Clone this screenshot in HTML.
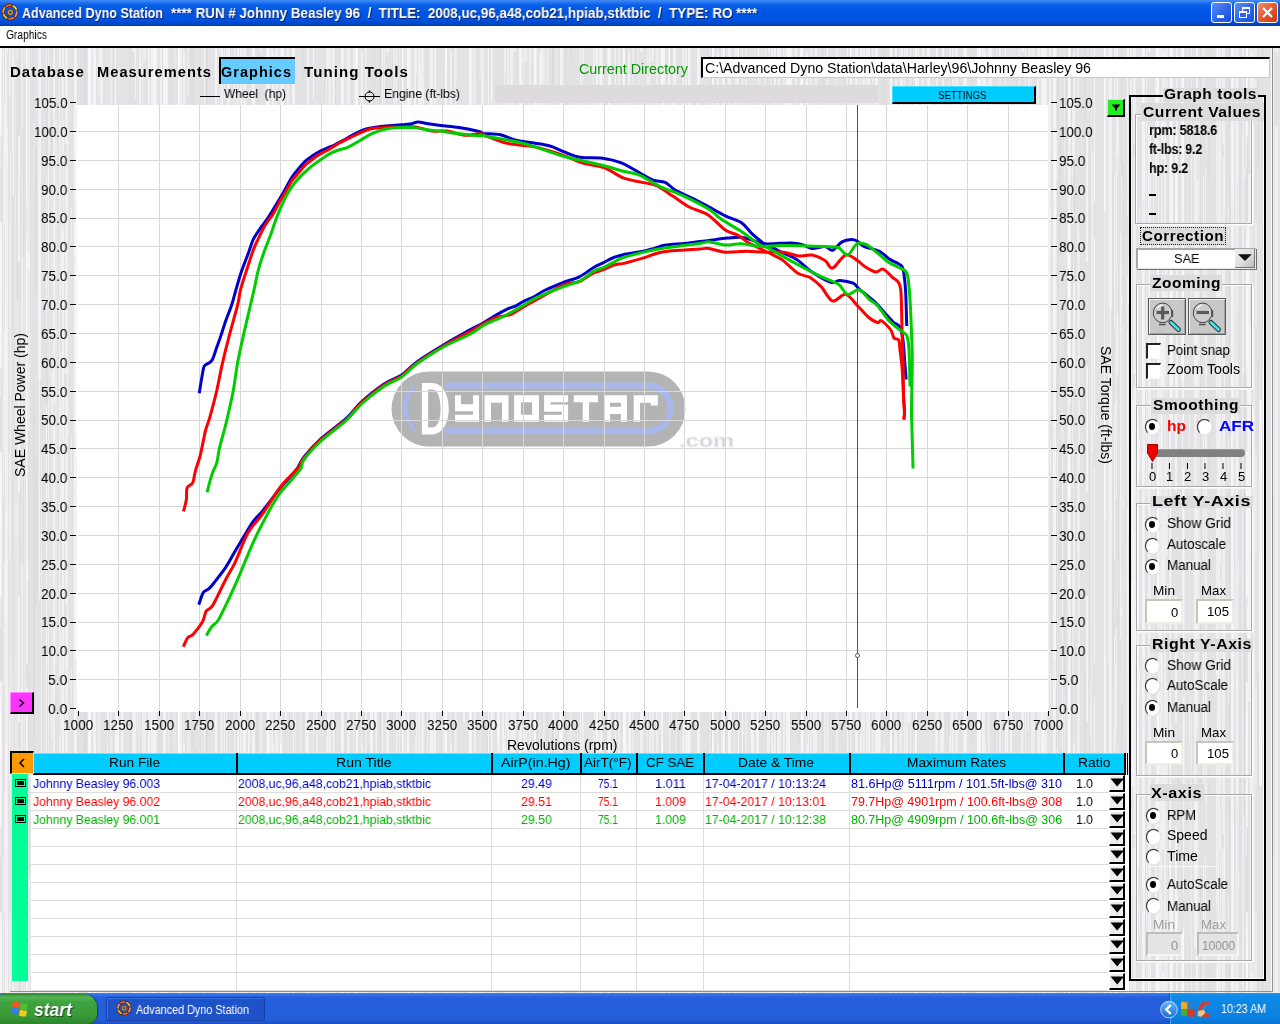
<!DOCTYPE html><html><head><meta charset="utf-8"><style>
*{margin:0;padding:0;box-sizing:border-box}
html,body{width:1280px;height:1024px;overflow:hidden;background:#dfdfe0;font-family:"Liberation Sans",sans-serif;}
.a{position:absolute;white-space:nowrap}
body>div.a{will-change:transform}
#metal{position:absolute;left:0;top:48px;width:1280px;height:946px;background:#e3e2e4}
.lb{position:absolute;background:#dcdcdc}
.fr{position:absolute;border:1px solid #fafafa;box-shadow:inset 1px 1px 0 #b4b4b4, -1px -1px 0 #b4b4b4}
.radio{position:absolute;width:15px;height:16px;border-radius:50%;background:#fff;border:1.5px solid #f0f0f0;border-top-color:#222;border-left-color:#222;box-shadow:0 0 0 0.6px #d8d8d8}
.radio.on::after{content:"";position:absolute;left:2.75px;top:2.75px;width:6.5px;height:7.5px;border-radius:50%;background:#000}
.inp{position:absolute;background:#fff;border:2px solid #f0ede4;border-top-color:#c8c4b8;border-left-color:#c8c4b8;}
.chk{position:absolute;width:15px;height:16px;background:#fff;border:1px solid #f4f4f4;border-top:2px solid #222;border-left:2px solid #222}
</style></head><body>
<div id="metal"></div>
<svg class="a" style="left:0;top:48px" width="1280" height="946"><defs><pattern id="p1" width="127" height="946" patternUnits="userSpaceOnUse"><rect x="41" y="404" width="1" height="349" fill="rgb(237,237,238)" opacity="0.8"/><rect x="74" y="931" width="1" height="819" fill="rgb(239,239,239)" opacity="0.8"/><rect x="74" y="-15" width="1" height="819" fill="rgb(239,239,239)" opacity="0.8"/><rect x="55" y="71" width="2" height="546" fill="rgb(237,234,237)" opacity="0.8"/><rect x="105" y="126" width="2" height="528" fill="rgb(246,246,248)" opacity="0.8"/><rect x="74" y="50" width="2" height="526" fill="rgb(236,235,237)" opacity="0.8"/><rect x="53" y="553" width="1" height="420" fill="rgb(245,243,247)" opacity="0.8"/><rect x="53" y="-393" width="1" height="420" fill="rgb(245,243,247)" opacity="0.8"/><rect x="104" y="185" width="3" height="405" fill="rgb(245,244,246)" opacity="0.8"/><rect x="12" y="729" width="2" height="364" fill="rgb(245,245,247)" opacity="0.8"/><rect x="12" y="-217" width="2" height="364" fill="rgb(245,245,247)" opacity="0.8"/><rect x="26" y="696" width="2" height="844" fill="rgb(242,240,243)" opacity="0.8"/><rect x="26" y="-250" width="2" height="844" fill="rgb(242,240,243)" opacity="0.8"/><rect x="74" y="370" width="2" height="606" fill="rgb(239,238,241)" opacity="0.8"/><rect x="74" y="-576" width="2" height="606" fill="rgb(239,238,241)" opacity="0.8"/><rect x="99" y="83" width="1" height="888" fill="rgb(240,237,241)" opacity="0.8"/><rect x="99" y="-863" width="1" height="888" fill="rgb(240,237,241)" opacity="0.8"/><rect x="93" y="294" width="2" height="923" fill="rgb(237,237,239)" opacity="0.8"/><rect x="93" y="-652" width="2" height="923" fill="rgb(237,237,239)" opacity="0.8"/><rect x="53" y="775" width="1" height="650" fill="rgb(238,235,239)" opacity="0.8"/><rect x="53" y="-171" width="1" height="650" fill="rgb(238,235,239)" opacity="0.8"/><rect x="5" y="79" width="3" height="871" fill="rgb(245,243,246)" opacity="0.8"/><rect x="5" y="-867" width="3" height="871" fill="rgb(245,243,246)" opacity="0.8"/><rect x="88" y="608" width="1" height="808" fill="rgb(245,242,245)" opacity="0.8"/><rect x="88" y="-338" width="1" height="808" fill="rgb(245,242,245)" opacity="0.8"/><rect x="107" y="276" width="1" height="785" fill="rgb(247,247,247)" opacity="0.8"/><rect x="107" y="-670" width="1" height="785" fill="rgb(247,247,247)" opacity="0.8"/><rect x="93" y="317" width="3" height="891" fill="rgb(246,243,247)" opacity="0.8"/><rect x="93" y="-629" width="3" height="891" fill="rgb(246,243,247)" opacity="0.8"/><rect x="91" y="908" width="2" height="655" fill="rgb(236,233,237)" opacity="0.8"/><rect x="91" y="-38" width="2" height="655" fill="rgb(236,233,237)" opacity="0.8"/><rect x="21" y="119" width="2" height="805" fill="rgb(236,235,237)" opacity="0.8"/><rect x="16" y="253" width="3" height="707" fill="rgb(242,239,242)" opacity="0.8"/><rect x="16" y="-693" width="3" height="707" fill="rgb(242,239,242)" opacity="0.8"/><rect x="21" y="411" width="2" height="862" fill="rgb(240,239,241)" opacity="0.8"/><rect x="21" y="-535" width="2" height="862" fill="rgb(240,239,241)" opacity="0.8"/><rect x="110" y="285" width="2" height="725" fill="rgb(241,238,241)" opacity="0.8"/><rect x="110" y="-661" width="2" height="725" fill="rgb(241,238,241)" opacity="0.8"/><rect x="19" y="180" width="1" height="454" fill="rgb(239,238,239)" opacity="0.8"/><rect x="62" y="186" width="2" height="569" fill="rgb(240,240,240)" opacity="0.8"/><rect x="53" y="378" width="2" height="924" fill="rgb(245,243,245)" opacity="0.8"/><rect x="53" y="-568" width="2" height="924" fill="rgb(245,243,245)" opacity="0.8"/><rect x="88" y="632" width="2" height="355" fill="rgb(243,240,244)" opacity="0.8"/><rect x="88" y="-314" width="2" height="355" fill="rgb(243,240,244)" opacity="0.8"/><rect x="51" y="106" width="2" height="793" fill="rgb(246,243,246)" opacity="0.8"/><rect x="24" y="213" width="1" height="751" fill="rgb(238,238,239)" opacity="0.8"/><rect x="24" y="-733" width="1" height="751" fill="rgb(238,238,239)" opacity="0.8"/><rect x="76" y="104" width="1" height="300" fill="rgb(245,244,247)" opacity="0.8"/><rect x="12" y="628" width="1" height="326" fill="rgb(237,236,239)" opacity="0.8"/><rect x="12" y="-318" width="1" height="326" fill="rgb(237,236,239)" opacity="0.8"/><rect x="48" y="649" width="1" height="558" fill="rgb(241,239,242)" opacity="0.8"/><rect x="48" y="-297" width="1" height="558" fill="rgb(241,239,242)" opacity="0.8"/><rect x="15" y="869" width="1" height="799" fill="rgb(243,240,244)" opacity="0.8"/><rect x="15" y="-77" width="1" height="799" fill="rgb(243,240,244)" opacity="0.8"/><rect x="39" y="147" width="1" height="404" fill="rgb(247,245,249)" opacity="0.8"/><rect x="33" y="848" width="2" height="465" fill="rgb(244,244,244)" opacity="0.8"/><rect x="33" y="-98" width="2" height="465" fill="rgb(244,244,244)" opacity="0.8"/><rect x="121" y="370" width="2" height="450" fill="rgb(247,247,249)" opacity="0.8"/><rect x="38" y="884" width="3" height="393" fill="rgb(247,245,249)" opacity="0.8"/><rect x="38" y="-62" width="3" height="393" fill="rgb(247,245,249)" opacity="0.8"/><rect x="46" y="364" width="1" height="528" fill="rgb(244,242,246)" opacity="0.8"/><rect x="28" y="830" width="2" height="499" fill="rgb(248,247,249)" opacity="0.8"/><rect x="28" y="-116" width="2" height="499" fill="rgb(248,247,249)" opacity="0.8"/><rect x="94" y="204" width="1" height="830" fill="rgb(243,241,245)" opacity="0.8"/><rect x="94" y="-742" width="1" height="830" fill="rgb(243,241,245)" opacity="0.8"/><rect x="3" y="809" width="1" height="586" fill="rgb(243,241,243)" opacity="0.8"/><rect x="3" y="-137" width="1" height="586" fill="rgb(243,241,243)" opacity="0.8"/><rect x="88" y="352" width="2" height="757" fill="rgb(248,246,249)" opacity="0.8"/><rect x="88" y="-594" width="2" height="757" fill="rgb(248,246,249)" opacity="0.8"/><rect x="10" y="104" width="1" height="532" fill="rgb(243,242,244)" opacity="0.8"/><rect x="26" y="639" width="2" height="924" fill="rgb(249,249,250)" opacity="0.8"/><rect x="26" y="-307" width="2" height="924" fill="rgb(249,249,250)" opacity="0.8"/><rect x="116" y="352" width="3" height="386" fill="rgb(249,249,250)" opacity="0.8"/><rect x="100" y="768" width="3" height="504" fill="rgb(243,242,244)" opacity="0.8"/><rect x="100" y="-178" width="3" height="504" fill="rgb(243,242,244)" opacity="0.8"/></pattern><pattern id="p2" width="173" height="310" patternUnits="userSpaceOnUse"><rect x="162" y="44" width="1" height="242" fill="rgb(219,216,221)" opacity="0.35"/><rect x="21" y="81" width="3" height="127" fill="rgb(214,214,214)" opacity="0.35"/><rect x="151" y="74" width="2" height="282" fill="rgb(222,220,222)" opacity="0.35"/><rect x="151" y="-236" width="2" height="282" fill="rgb(222,220,222)" opacity="0.35"/><rect x="140" y="67" width="2" height="50" fill="rgb(212,212,214)" opacity="0.35"/><rect x="35" y="99" width="2" height="148" fill="rgb(212,210,212)" opacity="0.35"/><rect x="74" y="123" width="2" height="206" fill="rgb(216,213,216)" opacity="0.35"/><rect x="74" y="-187" width="2" height="206" fill="rgb(216,213,216)" opacity="0.35"/><rect x="15" y="181" width="3" height="274" fill="rgb(222,219,224)" opacity="0.35"/><rect x="15" y="-129" width="3" height="274" fill="rgb(222,219,224)" opacity="0.35"/><rect x="33" y="77" width="2" height="308" fill="rgb(220,220,221)" opacity="0.35"/><rect x="33" y="-233" width="2" height="308" fill="rgb(220,220,221)" opacity="0.35"/><rect x="46" y="2" width="2" height="116" fill="rgb(214,213,215)" opacity="0.35"/><rect x="158" y="61" width="3" height="71" fill="rgb(217,214,217)" opacity="0.35"/><rect x="143" y="127" width="1" height="137" fill="rgb(216,216,216)" opacity="0.35"/><rect x="129" y="287" width="2" height="54" fill="rgb(224,224,225)" opacity="0.35"/><rect x="129" y="-23" width="2" height="54" fill="rgb(224,224,225)" opacity="0.35"/><rect x="83" y="258" width="2" height="302" fill="rgb(215,213,216)" opacity="0.35"/><rect x="83" y="-52" width="2" height="302" fill="rgb(215,213,216)" opacity="0.35"/><rect x="130" y="244" width="2" height="299" fill="rgb(215,213,217)" opacity="0.35"/><rect x="130" y="-66" width="2" height="299" fill="rgb(215,213,217)" opacity="0.35"/><rect x="51" y="70" width="2" height="253" fill="rgb(213,210,214)" opacity="0.35"/><rect x="51" y="-240" width="2" height="253" fill="rgb(213,210,214)" opacity="0.35"/><rect x="80" y="123" width="1" height="259" fill="rgb(213,212,215)" opacity="0.35"/><rect x="80" y="-187" width="1" height="259" fill="rgb(213,212,215)" opacity="0.35"/><rect x="77" y="79" width="1" height="227" fill="rgb(214,212,214)" opacity="0.35"/><rect x="119" y="48" width="1" height="243" fill="rgb(226,223,226)" opacity="0.35"/><rect x="170" y="82" width="1" height="260" fill="rgb(220,217,221)" opacity="0.35"/><rect x="170" y="-228" width="1" height="260" fill="rgb(220,217,221)" opacity="0.35"/><rect x="107" y="182" width="1" height="203" fill="rgb(213,211,213)" opacity="0.35"/><rect x="107" y="-128" width="1" height="203" fill="rgb(213,211,213)" opacity="0.35"/><rect x="86" y="234" width="2" height="265" fill="rgb(223,223,224)" opacity="0.35"/><rect x="86" y="-76" width="2" height="265" fill="rgb(223,223,224)" opacity="0.35"/><rect x="84" y="151" width="2" height="302" fill="rgb(213,213,213)" opacity="0.35"/><rect x="84" y="-159" width="2" height="302" fill="rgb(213,213,213)" opacity="0.35"/><rect x="26" y="135" width="1" height="179" fill="rgb(212,211,213)" opacity="0.35"/><rect x="26" y="-175" width="1" height="179" fill="rgb(212,211,213)" opacity="0.35"/><rect x="33" y="132" width="2" height="247" fill="rgb(214,211,216)" opacity="0.35"/><rect x="33" y="-178" width="2" height="247" fill="rgb(214,211,216)" opacity="0.35"/><rect x="83" y="142" width="1" height="69" fill="rgb(224,223,225)" opacity="0.35"/><rect x="18" y="8" width="1" height="85" fill="rgb(224,222,224)" opacity="0.35"/><rect x="155" y="34" width="1" height="175" fill="rgb(225,225,226)" opacity="0.35"/><rect x="2" y="283" width="1" height="253" fill="rgb(226,224,228)" opacity="0.35"/><rect x="2" y="-27" width="1" height="253" fill="rgb(226,224,228)" opacity="0.35"/><rect x="33" y="269" width="1" height="162" fill="rgb(213,212,214)" opacity="0.35"/><rect x="33" y="-41" width="1" height="162" fill="rgb(213,212,214)" opacity="0.35"/><rect x="12" y="103" width="1" height="199" fill="rgb(222,220,224)" opacity="0.35"/><rect x="52" y="228" width="1" height="296" fill="rgb(222,221,223)" opacity="0.35"/><rect x="52" y="-82" width="1" height="296" fill="rgb(222,221,223)" opacity="0.35"/><rect x="88" y="128" width="1" height="58" fill="rgb(212,212,214)" opacity="0.35"/><rect x="129" y="97" width="2" height="303" fill="rgb(219,218,220)" opacity="0.35"/><rect x="129" y="-213" width="2" height="303" fill="rgb(219,218,220)" opacity="0.35"/><rect x="27" y="221" width="3" height="293" fill="rgb(220,217,222)" opacity="0.35"/><rect x="27" y="-89" width="3" height="293" fill="rgb(220,217,222)" opacity="0.35"/><rect x="78" y="110" width="3" height="157" fill="rgb(217,216,219)" opacity="0.35"/><rect x="162" y="207" width="1" height="217" fill="rgb(212,211,212)" opacity="0.35"/><rect x="162" y="-103" width="1" height="217" fill="rgb(212,211,212)" opacity="0.35"/><rect x="18" y="130" width="3" height="260" fill="rgb(214,214,214)" opacity="0.35"/><rect x="18" y="-180" width="3" height="260" fill="rgb(214,214,214)" opacity="0.35"/><rect x="170" y="259" width="2" height="184" fill="rgb(221,220,223)" opacity="0.35"/><rect x="170" y="-51" width="2" height="184" fill="rgb(221,220,223)" opacity="0.35"/><rect x="75" y="235" width="1" height="134" fill="rgb(214,212,215)" opacity="0.35"/><rect x="75" y="-75" width="1" height="134" fill="rgb(214,212,215)" opacity="0.35"/><rect x="0" y="186" width="1" height="208" fill="rgb(220,218,220)" opacity="0.35"/><rect x="0" y="-124" width="1" height="208" fill="rgb(220,218,220)" opacity="0.35"/></pattern><pattern id="p3" width="89" height="230" patternUnits="userSpaceOnUse"><rect x="4" y="55" width="1" height="121" fill="rgb(245,245,246)" opacity="0.7"/><rect x="48" y="121" width="1" height="101" fill="rgb(246,245,248)" opacity="0.7"/><rect x="0" y="67" width="1" height="52" fill="rgb(244,241,246)" opacity="0.7"/><rect x="5" y="5" width="2" height="106" fill="rgb(249,248,249)" opacity="0.7"/><rect x="74" y="218" width="2" height="222" fill="rgb(244,241,245)" opacity="0.7"/><rect x="74" y="-12" width="2" height="222" fill="rgb(244,241,245)" opacity="0.7"/><rect x="63" y="72" width="1" height="215" fill="rgb(244,244,246)" opacity="0.7"/><rect x="63" y="-158" width="1" height="215" fill="rgb(244,244,246)" opacity="0.7"/><rect x="65" y="109" width="3" height="217" fill="rgb(244,244,246)" opacity="0.7"/><rect x="65" y="-121" width="3" height="217" fill="rgb(244,244,246)" opacity="0.7"/><rect x="74" y="174" width="3" height="207" fill="rgb(247,247,247)" opacity="0.7"/><rect x="74" y="-56" width="3" height="207" fill="rgb(247,247,247)" opacity="0.7"/><rect x="5" y="163" width="1" height="122" fill="rgb(243,240,244)" opacity="0.7"/><rect x="5" y="-67" width="1" height="122" fill="rgb(243,240,244)" opacity="0.7"/><rect x="71" y="160" width="1" height="34" fill="rgb(247,244,248)" opacity="0.7"/><rect x="0" y="204" width="2" height="47" fill="rgb(242,242,244)" opacity="0.7"/><rect x="0" y="-26" width="2" height="47" fill="rgb(242,242,244)" opacity="0.7"/><rect x="60" y="207" width="1" height="49" fill="rgb(248,247,250)" opacity="0.7"/><rect x="60" y="-23" width="1" height="49" fill="rgb(248,247,250)" opacity="0.7"/><rect x="26" y="189" width="1" height="196" fill="rgb(254,251,255)" opacity="0.7"/><rect x="26" y="-41" width="1" height="196" fill="rgb(254,251,255)" opacity="0.7"/><rect x="9" y="175" width="2" height="103" fill="rgb(241,240,241)" opacity="0.7"/><rect x="9" y="-55" width="2" height="103" fill="rgb(241,240,241)" opacity="0.7"/><rect x="76" y="84" width="1" height="95" fill="rgb(249,248,249)" opacity="0.7"/><rect x="61" y="124" width="1" height="98" fill="rgb(243,242,245)" opacity="0.7"/><rect x="62" y="181" width="1" height="162" fill="rgb(249,246,250)" opacity="0.7"/><rect x="62" y="-49" width="1" height="162" fill="rgb(249,246,250)" opacity="0.7"/><rect x="59" y="228" width="1" height="170" fill="rgb(246,244,246)" opacity="0.7"/><rect x="59" y="-2" width="1" height="170" fill="rgb(246,244,246)" opacity="0.7"/><rect x="60" y="74" width="1" height="147" fill="rgb(242,239,243)" opacity="0.7"/><rect x="49" y="53" width="1" height="49" fill="rgb(242,241,244)" opacity="0.7"/><rect x="67" y="92" width="1" height="63" fill="rgb(248,248,250)" opacity="0.7"/><rect x="46" y="127" width="1" height="154" fill="rgb(252,252,252)" opacity="0.7"/><rect x="46" y="-103" width="1" height="154" fill="rgb(252,252,252)" opacity="0.7"/><rect x="0" y="174" width="2" height="145" fill="rgb(252,250,254)" opacity="0.7"/><rect x="0" y="-56" width="2" height="145" fill="rgb(252,250,254)" opacity="0.7"/><rect x="18" y="88" width="2" height="126" fill="rgb(250,250,251)" opacity="0.7"/><rect x="0" y="192" width="1" height="116" fill="rgb(252,252,252)" opacity="0.7"/><rect x="0" y="-38" width="1" height="116" fill="rgb(252,252,252)" opacity="0.7"/></pattern></defs><rect width="1280" height="946" fill="url(#p1)"/><rect width="1280" height="946" fill="url(#p2)"/><rect width="1280" height="946" fill="url(#p3)"/></svg>
<div class="a" style="left:0;top:0;width:1280px;height:26px;background:linear-gradient(#3e8ef7 0px,#2a78f2 2px,#0a5fe8 5px,#0055e5 12px,#0052e0 20px,#0046c8 24px,#003aa8 26px);"></div>
<svg class="a" style="left:1px;top:2.5px" width="18" height="18" viewBox="0 0 18 18"><path d="M5.60 3.11A6.8 6.8 0 0 1 9.95 2.27" fill="none" stroke="#5a2008" stroke-width="3.2" stroke-linecap="round"/><path d="M12.40 3.11A6.8 6.8 0 0 1 15.30 6.45" fill="none" stroke="#5a2008" stroke-width="3.2" stroke-linecap="round"/><path d="M15.80 9.00A6.8 6.8 0 0 1 14.36 13.19" fill="none" stroke="#5a2008" stroke-width="3.2" stroke-linecap="round"/><path d="M12.40 14.89A6.8 6.8 0 0 1 8.05 15.73" fill="none" stroke="#5a2008" stroke-width="3.2" stroke-linecap="round"/><path d="M5.60 14.89A6.8 6.8 0 0 1 2.70 11.55" fill="none" stroke="#5a2008" stroke-width="3.2" stroke-linecap="round"/><path d="M2.20 9.00A6.8 6.8 0 0 1 3.64 4.81" fill="none" stroke="#5a2008" stroke-width="3.2" stroke-linecap="round"/><path d="M5.60 3.11A6.8 6.8 0 0 1 9.95 2.27" fill="none" stroke="#f06828" stroke-width="1.8" stroke-linecap="round"/><path d="M12.40 3.11A6.8 6.8 0 0 1 15.30 6.45" fill="none" stroke="#f8c838" stroke-width="1.8" stroke-linecap="round"/><path d="M15.80 9.00A6.8 6.8 0 0 1 14.36 13.19" fill="none" stroke="#f89060" stroke-width="1.8" stroke-linecap="round"/><path d="M12.40 14.89A6.8 6.8 0 0 1 8.05 15.73" fill="none" stroke="#f07030" stroke-width="1.8" stroke-linecap="round"/><path d="M5.60 14.89A6.8 6.8 0 0 1 2.70 11.55" fill="none" stroke="#f8c020" stroke-width="1.8" stroke-linecap="round"/><path d="M2.20 9.00A6.8 6.8 0 0 1 3.64 4.81" fill="none" stroke="#f0a068" stroke-width="1.8" stroke-linecap="round"/><circle cx="9.3" cy="9.3" r="2" fill="none" stroke="#6a3008" stroke-width="2.2"/><circle cx="9.3" cy="9.3" r="2" fill="none" stroke="#f0a020" stroke-width="1.2"/></svg>
<div class="a" style="left:22.00px;top:6.15px;font-size:14px;line-height:14px;font-weight:bold;color:#fff;transform:scaleX(0.8973);transform-origin:0 0;text-shadow:1px 1px 0 #0a246a;">Advanced Dyno Station</div>
<div class="a" style="left:171.00px;top:6.15px;font-size:14px;line-height:14px;font-weight:bold;color:#fff;transform:scaleX(0.9570);transform-origin:0 0;text-shadow:1px 1px 0 #0a246a;white-space:pre;">**** RUN # Johnny Beasley 96  /  TITLE:  2008,uc,96,a48,cob21,hpiab,stktbic  /  TYPE: RO ****</div>
<div class="a" style="left:1211px;top:2px;width:21px;height:21px;border:1px solid #fff;border-radius:3px;background:linear-gradient(135deg,#5a8cf8,#2a62e8 60%,#1c4fd8)"><div class="a" style="left:5px;top:12px;width:7px;height:3px;background:#fff"></div></div>
<div class="a" style="left:1234px;top:2px;width:21px;height:21px;border:1px solid #fff;border-radius:3px;background:linear-gradient(135deg,#5a8cf8,#2a62e8 60%,#1c4fd8)"><div class="a" style="left:7px;top:4px;width:8px;height:7px;border:1px solid #fff;border-top-width:2px"></div><div class="a" style="left:4px;top:8px;width:8px;height:7px;border:1px solid #fff;border-top-width:2px;background:#2f66ea"></div></div>
<div class="a" style="left:1257px;top:2px;width:21px;height:21px;border:1px solid #fff;border-radius:3px;background:linear-gradient(135deg,#f0906a,#e0542a 55%,#c83c10)"><svg class="a" style="left:3px;top:3px" width="13" height="13"><path d="M2 2L11 11M11 2L2 11" stroke="#fff" stroke-width="2.2"/></svg></div>
<div class="a" style="left:0;top:26px;width:1280px;height:20px;background:#fff"></div>
<div class="a" style="left:6.00px;top:28.84px;font-size:12px;line-height:12px;color:#000;transform:scaleX(0.8538);transform-origin:0 0;">Graphics</div>
<div class="a" style="left:0;top:46px;width:1280px;height:2px;background:#000"></div>
<div class="a" style="left:219px;top:57px;width:76px;height:27px;background:#66ccff;border-top:2px solid #000;border-left:2px solid #000"></div>
<div class="a" style="left:10.00px;top:65.15px;font-size:14px;line-height:14px;font-weight:bold;color:#000;letter-spacing:1px;transform:scaleX(1.0675);transform-origin:0 0;">Database</div>
<div class="a" style="left:97.00px;top:65.15px;font-size:14px;line-height:14px;font-weight:bold;color:#000;letter-spacing:1px;transform:scaleX(1.0450);transform-origin:0 0;">Measurements</div>
<div class="a" style="left:221.00px;top:65.15px;font-size:14px;line-height:14px;font-weight:bold;color:#000;letter-spacing:1px;transform:scaleX(1.0336);transform-origin:0 0;">Graphics</div>
<div class="a" style="left:304.00px;top:65.15px;font-size:14px;line-height:14px;font-weight:bold;color:#000;letter-spacing:1px;transform:scaleX(1.0737);transform-origin:0 0;">Tuning Tools</div>
<div class="a" style="left:579.00px;top:62.15px;font-size:14px;line-height:14px;color:#009900;transform:scaleX(1.0227);transform-origin:0 0;">Current Directory</div>
<div class="a" style="left:701px;top:57px;width:569px;height:21px;background:#fff;border-top:2px solid #000;border-left:2px solid #000;border-right:1px solid #c8c8c8;border-bottom:1px solid #c8c8c8"></div>
<div class="a" style="left:705.00px;top:61.15px;font-size:14px;line-height:14px;color:#000;transform:scaleX(1.0122);transform-origin:0 0;">C:\Advanced Dyno Station\data\Harley\96\Johnny Beasley 96</div>
<div class="a" style="left:200px;top:96px;width:20px;height:1px;background:#000"></div>
<div class="a" style="left:224.00px;top:87.00px;font-size:13px;line-height:13px;color:#000;transform:scaleX(0.9227);transform-origin:0 0;white-space:pre;">Wheel  (hp)</div>
<svg class="a" style="left:358px;top:89px" width="24" height="16"><path d="M1 7.5H22" stroke="#000" stroke-width="1"/><circle cx="11.5" cy="7.5" r="4.5" fill="none" stroke="#000" stroke-width="1"/><path d="M11.5 1.5v2M11.5 11.5v2" stroke="#000" stroke-width="1.4"/></svg>
<div class="a" style="left:384.00px;top:87.00px;font-size:13px;line-height:13px;color:#000;transform:scaleX(0.9392);transform-origin:0 0;">Engine (ft-lbs)</div>
<div class="a" style="left:495px;top:85px;width:383px;height:18px;background:#dddbdd"></div>
<div class="a" style="left:892px;top:86px;width:144px;height:18px;background:#00ccff;border-right:2px solid #000;border-bottom:2px solid #000;border-top:1px solid #40e0ff;border-left:1px solid #40e0ff"></div>
<div class="a" style="left:938.25px;top:90.27px;font-size:11.5px;line-height:11.5px;color:#000;transform:scaleX(0.8434);transform-origin:0 0;">SETTINGS</div>
<svg class="a" style="left:0;top:0" width="1280" height="760" viewBox="0 0 1280 760"><rect x="77" y="105" width="971.5" height="607" fill="#fff"/><g><rect x="391.5" y="371.5" width="294" height="75" rx="37.5" fill="#b4b4b4"/><path d="M445 385.6 H650 A22.9 22.9 0 0 1 650 431.2 H445" fill="none" stroke="#a8b8ec" stroke-width="6"/><path d="M414 384.5 Q390.5 408 415 432 L416.5 430 Q399.5 408 415.5 386.5 Z" fill="#a8b8ec"/><path d="M421.9 383.1 H432 C442 383.1 448.75 394 448.75 408.75 C448.75 423.5 442 434.4 432 434.4 H421.9 Z M428.1 389.4 V427.5 H432.5 C437.5 427.5 440.6 419 440.6 408.5 C440.6 398 437.5 389.4 432.5 389.4 Z" fill="#fff" fill-rule="evenodd"/><path d="M455 395.25h6v16h-6zM455 404.3h24v7h-24zM473 395.25h6v26.5h-6zM455 414.75h24v6.9h-24zM484.5 395.25h24v7.5h-24zM484.5 395.25h6.5v26.5h-6.5zM502 395.25h6.5v26.5h-6.5zM514.1 395.25h24.8v7.1h-24.8zM514.1 414.75h24.8v6.9h-24.8zM514.1 395.25h6.8v26.4h-6.8zM532.1 395.25h6.8v26.4h-6.8zM544.1 395.25h24v7.1h-24zM544.1 395.25h6.4v16.5h-6.4zM544.1 404.6h24v7.1h-24zM561.75 404.6h6.35v17h-6.35zM544.1 414.75h24v6.9h-24zM573.75 395.25h24.35v7h-24.35zM582.75 395.25h6.35v26.4h-6.35zM603.9 395.25h23v7.6h-23zM603.9 395.25h6.1v26.4h-6.1zM620.9 395.25h6v26.4h-6zM603.9 406.7h23v7.3h-23zM633.7 395.25h22v7.6h-22zM633.7 395.25h6.3v26.4h-6.3zM650.7 395.25h7.1v10.35h-7.1z" fill="#fff"/><text x="679" y="447" font-family="Liberation Sans" font-weight="bold" font-size="19" textLength="55" lengthAdjust="spacingAndGlyphs" fill="#d0d0d0" stroke="#f0f0f0" stroke-width="1">.com</text></g><path d="M118.5 105V712M159.5 105V712M199.5 105V712M240.5 105V712M280.5 105V712M321.5 105V712M361.5 105V712M401.5 105V712M442.5 105V712M482.5 105V712M523.5 105V712M563.5 105V712M604.5 105V712M644.5 105V712M684.5 105V712M725.5 105V712M765.5 105V712M806.5 105V712M846.5 105V712M886.5 105V712M927.5 105V712M967.5 105V712M1008.5 105V712M78 679.5H1048M78 650.5H1048M78 622.5H1048M78 593.5H1048M78 564.5H1048M78 535.5H1048M78 506.5H1048M78 477.5H1048M78 448.5H1048M78 420.5H1048M78 391.5H1048M78 362.5H1048M78 333.5H1048M78 304.5H1048M78 275.5H1048M78 246.5H1048M78 218.5H1048M78 189.5H1048M78 160.5H1048M78 131.5H1048" stroke="#d8d8d8" stroke-width="1" fill="none"/><path d="M70 708.5H76M70 679.5H76M70 650.5H76M70 622.5H76M70 593.5H76M70 564.5H76M70 535.5H76M70 506.5H76M70 477.5H76M70 448.5H76M70 420.5H76M70 391.5H76M70 362.5H76M70 333.5H76M70 304.5H76M70 275.5H76M70 246.5H76M70 218.5H76M70 189.5H76M70 160.5H76M70 131.5H76M70 102.5H76M78.5 711V716M118.5 711V716M159.5 711V716M199.5 711V716M240.5 711V716M280.5 711V716M321.5 711V716M361.5 711V716M401.5 711V716M442.5 711V716M482.5 711V716M523.5 711V716M563.5 711V716M604.5 711V716M644.5 711V716M684.5 711V716M725.5 711V716M765.5 711V716M806.5 711V716M846.5 711V716M886.5 711V716M927.5 711V716M967.5 711V716M1008.5 711V716M1048.5 711V716" stroke="#000" stroke-width="1" fill="none"/><path d="M857.5 105V708" stroke="#6a3aa0" stroke-width="1"/><circle cx="857.5" cy="655.5" r="2" fill="#fff" stroke="#6a3aa0" stroke-width="1"/><path d="M199.5 391.7C200.1 388.0 202.5 373.0 203.4 368.8C204.3 364.6 204.3 366.1 205.0 365.3C205.7 364.5 206.6 364.4 207.8 363.6C209.0 362.8 210.8 362.5 212.2 360.0C213.6 357.5 215.2 351.7 216.6 347.8C218.0 343.9 219.5 339.9 221.0 335.4C222.5 330.9 224.5 324.4 226.2 319.6C227.9 314.8 229.9 310.3 231.5 305.6C233.1 300.9 234.3 295.6 235.9 290.0C237.5 284.4 239.6 276.9 241.7 270.8C243.8 264.7 246.9 257.1 248.8 252.0C250.6 246.9 251.7 242.8 253.4 239.2C255.1 235.6 256.9 233.4 259.3 229.8C261.7 226.2 265.4 221.9 268.7 216.8C272.0 211.7 277.2 202.8 280.0 198.2C282.8 193.6 284.0 191.3 285.9 188.0C287.8 184.7 289.8 180.4 291.7 177.5C293.6 174.6 295.5 172.4 297.6 169.9C299.7 167.4 302.4 163.9 304.6 161.7C306.8 159.5 309.4 157.9 311.6 156.4C313.8 154.9 315.7 153.6 318.1 152.3C320.5 151.0 324.4 149.3 326.9 148.2C329.4 147.1 331.5 146.5 333.9 145.3C336.3 144.1 338.6 142.8 342.2 140.9C345.8 139.0 352.5 135.1 356.3 133.2C360.1 131.3 362.7 130.0 366.1 129.0C369.5 128.0 371.8 127.6 377.4 126.9C383.0 126.2 396.1 125.2 401.3 124.8C406.5 124.4 407.0 124.5 409.7 124.1C412.4 123.7 415.4 122.1 418.1 122.0C420.8 121.9 423.0 122.8 426.6 123.4C430.2 124.0 435.4 124.8 440.6 125.5C445.8 126.2 452.6 126.6 458.9 127.6C465.2 128.6 476.2 130.9 480.0 131.8C483.8 132.7 479.3 132.9 482.5 133.4C485.7 133.9 494.9 133.6 500.3 134.7C505.7 135.8 510.7 138.9 516.3 140.3C521.9 141.7 529.6 142.3 535.0 143.2C540.4 144.1 545.4 144.7 550.0 146.0C554.6 147.3 558.7 149.8 563.5 151.6C568.3 153.4 573.7 156.1 580.0 157.2C586.3 158.3 596.0 157.3 602.6 158.2C609.2 159.1 615.3 160.5 621.3 162.9C627.3 165.3 634.9 170.3 640.0 173.1C645.1 175.9 649.1 178.7 653.1 180.2C657.1 181.7 661.5 180.7 665.2 182.4C668.9 184.1 671.0 187.7 676.1 190.6C681.2 193.5 691.3 197.7 696.9 200.5C702.5 203.3 706.6 205.7 711.1 208.1C715.6 210.5 720.4 213.4 725.3 215.8C730.2 218.2 737.6 220.1 741.8 222.9C746.0 225.7 747.9 229.9 751.6 233.3C755.3 236.7 762.4 242.4 764.7 244.2C767.0 246.0 762.9 243.3 766.0 244.7C769.1 246.1 778.8 250.8 783.8 253.2C788.8 255.6 792.5 256.7 797.0 259.7C801.5 262.7 806.6 268.3 812.0 271.9C817.4 275.5 826.2 280.8 830.7 282.2C835.2 283.6 836.4 280.2 840.0 280.4C843.6 280.6 850.2 281.9 853.2 283.2C856.2 284.5 856.5 286.7 858.9 288.8C861.3 290.9 865.5 294.0 868.2 296.3C870.9 298.6 873.1 300.0 876.0 303.0C878.9 306.0 883.8 311.9 886.6 315.0C889.4 318.1 891.4 320.4 893.5 322.3C895.6 324.2 898.3 324.2 899.8 327.0C901.3 329.8 902.2 333.9 903.0 340.0C903.8 346.1 904.5 358.9 905.0 365.0C905.5 371.1 905.8 375.9 906.0 378.0" fill="none" stroke="#0000cc" stroke-width="3" stroke-linejoin="round" stroke-linecap="square"/><path d="M199.3 603.2C200.0 601.5 201.8 594.7 203.4 592.4C205.0 590.1 207.2 590.3 209.0 588.7C210.8 587.1 211.8 585.6 214.5 582.2C217.2 578.8 222.4 572.3 225.7 567.4C229.0 562.5 231.7 557.1 234.9 551.6C238.1 546.1 243.0 537.9 246.0 533.0C249.0 528.1 250.8 524.6 253.5 521.0C256.2 517.4 258.5 516.1 262.8 510.8C267.1 505.5 275.3 494.1 280.6 487.6C285.9 481.1 292.5 474.9 296.2 470.0C299.9 465.1 299.9 462.1 304.0 457.0C308.1 451.9 314.8 444.4 321.6 438.2C328.4 432.0 339.8 424.1 346.2 418.3C352.6 412.5 355.5 407.3 361.5 401.9C367.5 396.5 377.3 388.6 383.7 384.3C390.1 380.0 396.3 378.6 401.6 375.0C406.9 371.4 410.1 366.8 416.6 362.1C423.1 357.4 433.8 350.9 442.3 345.7C450.8 340.5 463.6 333.5 470.0 329.9C476.4 326.3 478.6 325.6 482.6 323.3C486.6 321.0 491.3 317.9 495.2 315.6C499.1 313.3 503.9 310.7 507.2 309.1C510.5 307.5 513.4 307.0 516.0 305.8C518.6 304.6 520.8 302.8 523.6 301.4C526.4 300.0 530.2 298.7 533.5 297.0C536.8 295.3 539.6 292.9 544.4 290.5C549.2 288.1 557.9 284.5 563.5 282.3C569.1 280.1 574.6 279.2 579.4 276.8C584.2 274.4 589.7 269.8 593.6 267.5C597.5 265.2 600.3 264.2 603.5 262.6C606.7 261.0 610.6 258.8 613.8 257.5C617.0 256.2 618.2 255.7 623.2 254.7C628.2 253.7 639.7 252.1 644.8 251.0C649.9 249.9 651.8 249.0 655.0 248.1C658.2 247.2 659.7 246.1 664.5 245.3C669.3 244.5 679.1 244.0 684.8 243.4C690.5 242.8 695.6 242.1 700.0 241.6C704.4 241.1 708.1 240.6 712.5 240.0C716.9 239.4 723.0 238.5 727.5 238.1C732.0 237.7 736.7 236.9 740.6 237.2C744.5 237.5 748.0 238.9 751.9 240.0C755.8 241.1 758.7 243.3 765.0 243.8C771.3 244.3 785.3 242.8 791.3 242.9C797.3 243.0 799.3 243.8 802.6 244.7C805.9 245.6 808.4 248.2 812.0 248.5C815.6 248.8 821.7 246.3 825.0 246.6C828.3 246.9 829.9 251.1 832.6 250.3C835.3 249.5 839.0 243.6 842.0 241.9C845.0 240.2 849.0 239.7 851.4 239.6C853.8 239.5 854.9 239.9 857.0 241.0C859.1 242.1 860.9 245.0 864.5 246.6C868.1 248.2 875.6 249.3 879.5 251.3C883.4 253.3 886.2 257.0 888.9 258.8C891.6 260.6 894.3 261.4 896.4 262.6C898.5 263.8 900.8 264.5 902.0 266.3C903.2 268.1 903.3 269.6 903.9 273.8C904.5 278.0 905.3 284.5 905.7 292.6C906.1 300.7 906.5 319.4 906.7 324.5" fill="none" stroke="#0000cc" stroke-width="3" stroke-linejoin="round" stroke-linecap="square"/><path d="M183.9 510.0C184.3 508.3 185.9 502.8 186.4 499.2C186.9 495.6 186.1 490.4 187.1 487.8C188.1 485.2 191.5 485.3 192.8 482.7C194.1 480.1 194.1 475.8 195.3 471.3C196.5 466.8 198.8 461.3 200.4 454.8C202.0 448.3 204.1 436.3 205.5 430.6C206.9 424.9 208.1 423.3 209.3 419.2C210.5 415.1 211.9 409.9 213.1 405.2C214.3 400.5 215.4 396.9 216.9 390.0C218.4 383.1 220.6 371.2 222.7 362.2C224.8 353.2 227.4 342.9 229.8 333.7C232.2 324.5 236.0 311.7 237.7 304.7C239.4 297.7 239.1 295.4 240.5 290.0C241.9 284.6 244.3 277.2 246.4 270.8C248.5 264.4 251.5 254.8 253.4 249.7C255.3 244.6 256.2 243.1 258.1 239.2C260.0 235.3 262.8 229.2 265.2 225.1C267.6 221.0 271.0 217.3 273.4 213.4C275.8 209.5 278.0 204.5 280.0 201.0C282.0 197.5 284.0 194.7 285.9 191.5C287.8 188.3 289.8 183.8 291.7 181.0C293.6 178.2 295.5 176.4 297.6 174.0C299.7 171.6 302.4 168.1 304.6 165.8C306.8 163.5 309.4 161.6 311.6 159.9C313.8 158.2 315.7 156.7 318.1 155.2C320.5 153.7 323.6 152.4 326.9 150.5C330.2 148.6 336.2 144.9 338.6 143.5C341.0 142.1 339.4 143.0 342.2 141.6C345.0 140.2 351.8 136.6 356.3 134.6C360.8 132.6 365.8 130.1 370.3 129.0C374.8 127.9 379.4 127.9 384.4 127.6C389.4 127.3 396.4 127.0 401.3 126.9C406.2 126.8 410.4 126.2 415.3 126.9C420.2 127.6 427.0 130.4 432.2 131.1C437.4 131.8 442.5 130.4 447.7 131.1C452.9 131.8 459.4 134.9 464.6 135.3C469.8 135.7 477.1 133.6 480.0 133.5C482.9 133.4 478.2 132.9 482.5 134.5C486.8 136.1 498.5 141.2 506.9 143.2C515.3 145.2 525.9 145.0 535.0 146.9C544.1 148.8 556.0 152.7 563.5 155.3C571.0 157.9 575.5 160.9 582.0 162.9C588.5 164.9 597.3 165.1 603.9 167.5C610.5 169.9 617.4 175.6 623.2 177.9C629.0 180.2 634.7 180.7 640.0 181.9C645.3 183.1 651.2 183.4 656.4 185.7C661.6 188.0 667.6 192.7 672.8 196.1C678.0 199.5 683.6 204.0 689.2 207.0C694.8 210.0 702.0 211.0 707.8 214.7C713.6 218.4 720.4 226.7 725.3 230.0C730.2 233.3 734.6 233.4 738.5 235.5C742.4 237.6 742.8 239.5 749.4 243.2C756.0 246.9 773.9 255.1 780.0 258.5C786.1 261.9 784.5 262.0 787.5 264.4C790.5 266.8 795.2 271.7 798.8 273.8C802.4 275.9 806.4 275.4 810.0 277.5C813.6 279.6 817.7 283.1 821.3 286.9C824.9 290.7 828.7 299.8 832.6 301.0C836.5 302.2 841.7 293.6 845.7 294.4C849.7 295.2 853.9 302.1 857.5 305.7C861.1 309.3 865.0 314.3 868.2 317.0C871.4 319.7 875.5 322.0 877.6 322.6C879.7 323.2 879.3 319.5 881.4 320.7C883.5 321.9 888.8 327.2 890.8 330.0C892.8 332.8 892.7 336.4 894.0 338.0C895.3 339.6 897.7 338.1 898.7 340.0C899.7 341.9 899.5 345.7 900.0 350.0C900.5 354.3 901.4 359.8 902.0 367.0C902.6 374.2 903.1 387.8 903.5 395.0C903.9 402.2 904.4 408.3 904.5 412.0C904.6 415.7 904.1 417.0 904.0 418.0" fill="none" stroke="#ff0000" stroke-width="3" stroke-linejoin="round" stroke-linecap="square"/><path d="M183.9 645.3C184.5 644.1 186.1 639.7 187.6 637.9C189.1 636.1 190.8 636.8 193.2 634.2C195.6 631.6 200.4 625.5 202.5 621.8C204.6 618.1 204.6 613.6 206.2 611.0C207.8 608.4 209.6 610.4 212.7 605.4C215.8 600.4 222.1 586.3 225.7 579.5C229.3 572.7 231.3 570.2 234.9 562.8C238.5 555.4 243.4 540.9 247.9 533.0C252.4 525.1 257.6 521.0 262.8 513.6C268.0 506.2 275.0 494.0 280.6 486.7C286.2 479.4 294.3 472.6 298.0 468.0C301.7 463.4 300.2 462.6 304.0 458.0C307.8 453.4 314.8 445.4 321.6 439.2C328.4 433.0 339.8 425.1 346.2 419.3C352.6 413.5 355.5 408.3 361.5 402.9C367.5 397.5 377.3 389.6 383.7 385.3C390.1 381.0 396.3 379.6 401.6 376.0C406.9 372.4 410.1 367.8 416.6 363.1C423.1 358.4 433.8 351.8 442.3 346.7C450.8 341.6 463.6 335.1 470.0 331.5C476.4 327.9 478.6 326.6 482.6 324.4C486.6 322.2 490.7 319.4 495.2 317.8C499.7 316.2 506.0 316.2 510.5 314.5C515.0 312.8 519.6 309.2 523.6 306.9C527.6 304.6 529.2 303.8 535.6 300.3C542.0 296.8 556.5 288.0 563.5 285.0C570.5 282.0 574.6 283.6 579.4 281.7C584.2 279.8 589.7 274.9 593.6 273.0C597.5 271.1 600.3 271.0 603.5 269.7C606.7 268.4 610.4 266.1 613.8 265.0C617.2 263.9 620.5 264.2 625.0 263.1C629.5 262.0 636.5 260.0 641.9 258.4C647.3 256.8 654.3 254.0 658.8 252.8C663.2 251.6 665.8 251.3 670.0 250.9C674.2 250.5 680.0 250.3 684.8 250.0C689.6 249.7 696.2 249.2 700.0 249.0C703.8 248.8 704.7 248.0 708.8 248.5C712.9 249.0 719.6 251.8 725.6 252.2C731.6 252.6 740.0 251.3 746.3 251.3C752.6 251.3 759.0 252.1 765.0 252.2C771.0 252.3 778.4 251.6 783.8 252.2C789.2 252.8 794.3 255.6 798.8 256.0C803.3 256.4 807.8 254.3 812.0 255.0C816.2 255.7 821.7 258.5 825.0 260.6C828.3 262.7 829.3 269.0 832.6 268.1C835.9 267.2 841.7 256.2 845.7 255.0C849.7 253.8 854.5 258.8 857.5 260.6C860.5 262.4 861.6 264.5 864.5 266.3C867.4 268.1 872.7 271.5 875.7 271.9C878.7 272.3 880.5 268.2 883.2 269.1C885.9 270.0 890.2 275.4 892.6 277.5C895.0 279.6 897.0 279.8 898.3 282.2C899.6 284.6 900.4 285.0 901.0 292.6C901.6 300.2 901.7 319.2 902.0 330.0C902.3 340.8 902.8 349.6 903.0 360.0C903.2 370.4 903.3 386.7 903.5 395.0C903.7 403.3 904.4 408.3 904.5 412.0C904.6 415.7 904.1 417.0 904.0 418.0" fill="none" stroke="#ff0000" stroke-width="3" stroke-linejoin="round" stroke-linecap="square"/><path d="M207.4 491.0C207.9 489.1 209.7 482.1 210.6 478.9C211.5 475.7 212.1 473.9 213.1 471.3C214.1 468.7 215.9 466.1 216.9 462.4C217.9 458.7 218.0 454.5 219.4 448.4C220.8 442.3 224.2 430.8 225.8 424.3C227.4 417.8 228.4 413.3 229.6 407.8C230.8 402.3 232.1 397.3 233.4 390.0C234.7 382.7 236.0 371.2 237.7 362.2C239.4 353.2 241.2 345.3 243.8 333.7C246.4 322.1 251.7 300.1 254.0 290.0C256.3 279.9 256.5 276.9 258.1 270.8C259.7 264.7 262.1 257.4 264.0 252.0C265.9 246.6 267.8 242.4 269.9 236.8C272.0 231.2 274.6 222.8 276.9 216.9C279.2 211.0 282.1 204.2 284.1 200.0C286.1 195.8 287.6 193.2 289.4 190.4C291.2 187.6 293.1 184.7 295.2 182.2C297.3 179.7 300.0 176.9 302.3 174.6C304.6 172.3 307.1 170.0 309.3 168.1C311.5 166.2 314.2 164.3 316.3 162.8C318.4 161.3 320.1 160.1 322.2 158.7C324.3 157.3 326.6 155.5 329.2 154.1C331.8 152.7 335.6 151.1 338.6 150.0C341.6 148.9 344.3 148.9 347.8 147.3C351.3 145.7 356.5 142.5 360.5 140.2C364.5 137.9 368.4 135.1 373.1 133.2C377.8 131.3 383.7 129.2 390.0 128.3C396.3 127.4 406.6 127.4 412.5 127.6C418.4 127.8 422.1 129.1 426.6 129.7C431.1 130.3 436.1 130.5 440.6 131.1C445.1 131.7 448.4 132.4 454.7 133.2C461.0 134.0 475.6 135.6 480.0 136.0C484.4 136.4 475.5 134.4 482.5 135.6C489.5 136.8 510.8 140.2 523.8 143.5C536.8 146.8 550.7 152.7 563.5 156.3C576.3 159.9 594.3 163.3 603.9 165.7C613.5 168.1 617.4 169.8 623.2 171.3C629.0 172.8 634.2 172.9 640.0 175.3C645.8 177.7 652.7 183.0 659.7 186.3C666.7 189.6 675.9 192.4 683.8 196.1C691.7 199.8 702.9 205.5 708.9 209.2C714.9 212.9 715.9 215.6 721.0 219.1C726.1 222.6 734.4 226.9 740.7 231.1C747.0 235.3 756.1 242.7 760.3 245.3C764.5 247.9 763.1 245.6 766.9 247.5C770.7 249.4 778.1 253.7 783.8 256.9C789.5 260.1 796.6 264.0 802.6 267.2C808.6 270.4 815.6 273.9 821.3 276.6C827.0 279.3 834.0 281.3 838.2 284.1C842.4 286.9 844.3 293.5 847.6 294.4C850.9 295.3 855.3 288.9 858.9 289.8C862.5 290.7 867.0 297.5 870.0 300.0C873.0 302.5 874.6 302.4 877.6 305.7C880.6 309.0 885.3 316.8 888.9 320.7C892.5 324.6 897.2 327.6 900.0 330.0C902.8 332.4 905.3 332.5 906.7 335.7C908.1 338.9 908.5 342.1 909.0 350.0C909.5 357.9 909.8 379.4 910.0 385.0" fill="none" stroke="#00cc00" stroke-width="3" stroke-linejoin="round" stroke-linecap="square"/><path d="M207.1 634.2C207.8 633.0 209.9 629.0 211.7 626.8C213.5 624.6 216.0 623.7 218.2 620.3C220.4 616.9 222.7 611.6 225.7 605.4C228.7 599.2 233.8 588.0 236.8 581.3C239.8 574.6 241.8 569.3 244.2 563.7C246.6 558.1 249.2 551.4 251.6 546.1C254.0 540.8 256.0 536.2 259.0 530.3C262.0 524.4 266.7 515.1 270.2 509.0C273.7 502.9 275.8 498.5 280.6 492.3C285.4 486.1 296.2 475.2 299.9 470.0C303.6 464.8 300.5 464.2 304.0 459.5C307.5 454.8 314.8 446.7 321.6 440.5C328.4 434.3 339.8 426.3 346.2 420.5C352.6 414.7 355.5 409.4 361.5 404.0C367.5 398.6 377.3 390.8 383.7 386.5C390.1 382.2 396.3 380.6 401.6 377.0C406.9 373.4 410.1 368.7 416.6 364.0C423.1 359.3 433.8 352.3 442.3 347.5C450.8 342.7 463.6 337.6 470.0 334.2C476.4 330.8 478.6 328.3 482.6 326.0C486.6 323.7 491.3 321.8 495.2 320.0C499.1 318.2 502.7 316.9 507.2 314.5C511.7 312.1 519.1 307.9 523.6 305.3C528.1 302.7 529.2 301.1 535.6 298.1C542.0 295.1 556.5 289.4 563.5 286.7C570.5 284.0 574.6 283.7 579.4 281.2C584.2 278.7 589.7 273.5 593.6 271.3C597.5 269.1 600.6 268.8 603.5 267.5C606.4 266.2 608.8 264.7 612.0 263.1C615.2 261.5 618.0 259.3 623.2 257.5C628.4 255.7 638.2 253.4 644.8 251.9C651.4 250.4 658.1 249.2 664.5 248.1C670.9 247.0 679.1 246.1 684.8 245.3C690.5 244.5 696.0 243.9 700.0 243.4C704.0 242.9 706.0 241.6 710.0 241.9C714.0 242.2 720.0 244.7 725.0 245.0C730.0 245.3 735.6 243.5 741.2 243.8C746.9 244.0 753.8 246.2 760.0 246.5C766.2 246.8 773.2 245.6 780.0 245.5C786.8 245.4 795.4 245.5 802.6 245.7C809.8 245.9 819.3 246.3 825.0 246.6C830.7 246.9 834.6 246.2 838.2 247.5C841.8 248.8 844.6 255.6 847.6 255.0C850.6 254.4 854.0 245.4 857.0 243.8C860.0 242.2 863.1 243.2 866.4 244.7C869.7 246.2 874.0 250.3 877.6 253.2C881.2 256.1 885.6 260.4 888.9 262.6C892.2 264.8 895.4 265.6 898.2 267.2C901.0 268.8 904.9 268.8 906.7 272.9C908.5 277.0 908.7 283.5 909.5 292.6C910.3 301.7 911.0 319.2 911.4 330.0C911.8 340.8 912.3 347.2 912.3 360.0C912.3 372.8 911.5 398.8 911.5 410.0C911.5 421.2 911.8 420.9 912.0 430.0C912.2 439.1 912.8 461.1 913.0 467.0" fill="none" stroke="#00cc00" stroke-width="3" stroke-linejoin="round" stroke-linecap="square"/></svg>
<div class="a" style="left:47.70px;top:700.98px;font-size:15.5px;line-height:15.5px;color:#000;transform:scaleX(0.8957);transform-origin:0 0;">0.0</div>
<div class="a" style="left:1058.70px;top:700.98px;font-size:15.5px;line-height:15.5px;color:#000;transform:scaleX(0.8957);transform-origin:0 0;">0.0</div>
<div class="a" style="left:47.70px;top:672.12px;font-size:15.5px;line-height:15.5px;color:#000;transform:scaleX(0.8957);transform-origin:0 0;">5.0</div>
<div class="a" style="left:1058.70px;top:672.12px;font-size:15.5px;line-height:15.5px;color:#000;transform:scaleX(0.8957);transform-origin:0 0;">5.0</div>
<div class="a" style="left:40.60px;top:643.27px;font-size:15.5px;line-height:15.5px;color:#000;transform:scaleX(0.8751);transform-origin:0 0;">10.0</div>
<div class="a" style="left:1058.70px;top:643.27px;font-size:15.5px;line-height:15.5px;color:#000;transform:scaleX(0.8751);transform-origin:0 0;">10.0</div>
<div class="a" style="left:40.60px;top:614.41px;font-size:15.5px;line-height:15.5px;color:#000;transform:scaleX(0.8751);transform-origin:0 0;">15.0</div>
<div class="a" style="left:1058.70px;top:614.41px;font-size:15.5px;line-height:15.5px;color:#000;transform:scaleX(0.8751);transform-origin:0 0;">15.0</div>
<div class="a" style="left:40.60px;top:585.55px;font-size:15.5px;line-height:15.5px;color:#000;transform:scaleX(0.8751);transform-origin:0 0;">20.0</div>
<div class="a" style="left:1058.70px;top:585.55px;font-size:15.5px;line-height:15.5px;color:#000;transform:scaleX(0.8751);transform-origin:0 0;">20.0</div>
<div class="a" style="left:40.60px;top:556.69px;font-size:15.5px;line-height:15.5px;color:#000;transform:scaleX(0.8751);transform-origin:0 0;">25.0</div>
<div class="a" style="left:1058.70px;top:556.69px;font-size:15.5px;line-height:15.5px;color:#000;transform:scaleX(0.8751);transform-origin:0 0;">25.0</div>
<div class="a" style="left:40.60px;top:527.84px;font-size:15.5px;line-height:15.5px;color:#000;transform:scaleX(0.8751);transform-origin:0 0;">30.0</div>
<div class="a" style="left:1058.70px;top:527.84px;font-size:15.5px;line-height:15.5px;color:#000;transform:scaleX(0.8751);transform-origin:0 0;">30.0</div>
<div class="a" style="left:40.60px;top:498.98px;font-size:15.5px;line-height:15.5px;color:#000;transform:scaleX(0.8751);transform-origin:0 0;">35.0</div>
<div class="a" style="left:1058.70px;top:498.98px;font-size:15.5px;line-height:15.5px;color:#000;transform:scaleX(0.8751);transform-origin:0 0;">35.0</div>
<div class="a" style="left:40.60px;top:470.12px;font-size:15.5px;line-height:15.5px;color:#000;transform:scaleX(0.8751);transform-origin:0 0;">40.0</div>
<div class="a" style="left:1058.70px;top:470.12px;font-size:15.5px;line-height:15.5px;color:#000;transform:scaleX(0.8751);transform-origin:0 0;">40.0</div>
<div class="a" style="left:40.60px;top:441.27px;font-size:15.5px;line-height:15.5px;color:#000;transform:scaleX(0.8751);transform-origin:0 0;">45.0</div>
<div class="a" style="left:1058.70px;top:441.27px;font-size:15.5px;line-height:15.5px;color:#000;transform:scaleX(0.8751);transform-origin:0 0;">45.0</div>
<div class="a" style="left:40.60px;top:412.41px;font-size:15.5px;line-height:15.5px;color:#000;transform:scaleX(0.8751);transform-origin:0 0;">50.0</div>
<div class="a" style="left:1058.70px;top:412.41px;font-size:15.5px;line-height:15.5px;color:#000;transform:scaleX(0.8751);transform-origin:0 0;">50.0</div>
<div class="a" style="left:40.60px;top:383.55px;font-size:15.5px;line-height:15.5px;color:#000;transform:scaleX(0.8751);transform-origin:0 0;">55.0</div>
<div class="a" style="left:1058.70px;top:383.55px;font-size:15.5px;line-height:15.5px;color:#000;transform:scaleX(0.8751);transform-origin:0 0;">55.0</div>
<div class="a" style="left:40.60px;top:354.70px;font-size:15.5px;line-height:15.5px;color:#000;transform:scaleX(0.8751);transform-origin:0 0;">60.0</div>
<div class="a" style="left:1058.70px;top:354.70px;font-size:15.5px;line-height:15.5px;color:#000;transform:scaleX(0.8751);transform-origin:0 0;">60.0</div>
<div class="a" style="left:40.60px;top:325.84px;font-size:15.5px;line-height:15.5px;color:#000;transform:scaleX(0.8751);transform-origin:0 0;">65.0</div>
<div class="a" style="left:1058.70px;top:325.84px;font-size:15.5px;line-height:15.5px;color:#000;transform:scaleX(0.8751);transform-origin:0 0;">65.0</div>
<div class="a" style="left:40.60px;top:296.98px;font-size:15.5px;line-height:15.5px;color:#000;transform:scaleX(0.8751);transform-origin:0 0;">70.0</div>
<div class="a" style="left:1058.70px;top:296.98px;font-size:15.5px;line-height:15.5px;color:#000;transform:scaleX(0.8751);transform-origin:0 0;">70.0</div>
<div class="a" style="left:40.60px;top:268.12px;font-size:15.5px;line-height:15.5px;color:#000;transform:scaleX(0.8751);transform-origin:0 0;">75.0</div>
<div class="a" style="left:1058.70px;top:268.12px;font-size:15.5px;line-height:15.5px;color:#000;transform:scaleX(0.8751);transform-origin:0 0;">75.0</div>
<div class="a" style="left:40.60px;top:239.27px;font-size:15.5px;line-height:15.5px;color:#000;transform:scaleX(0.8751);transform-origin:0 0;">80.0</div>
<div class="a" style="left:1058.70px;top:239.27px;font-size:15.5px;line-height:15.5px;color:#000;transform:scaleX(0.8751);transform-origin:0 0;">80.0</div>
<div class="a" style="left:40.60px;top:210.41px;font-size:15.5px;line-height:15.5px;color:#000;transform:scaleX(0.8751);transform-origin:0 0;">85.0</div>
<div class="a" style="left:1058.70px;top:210.41px;font-size:15.5px;line-height:15.5px;color:#000;transform:scaleX(0.8751);transform-origin:0 0;">85.0</div>
<div class="a" style="left:40.60px;top:181.55px;font-size:15.5px;line-height:15.5px;color:#000;transform:scaleX(0.8751);transform-origin:0 0;">90.0</div>
<div class="a" style="left:1058.70px;top:181.55px;font-size:15.5px;line-height:15.5px;color:#000;transform:scaleX(0.8751);transform-origin:0 0;">90.0</div>
<div class="a" style="left:40.60px;top:152.70px;font-size:15.5px;line-height:15.5px;color:#000;transform:scaleX(0.8751);transform-origin:0 0;">95.0</div>
<div class="a" style="left:1058.70px;top:152.70px;font-size:15.5px;line-height:15.5px;color:#000;transform:scaleX(0.8751);transform-origin:0 0;">95.0</div>
<div class="a" style="left:33.50px;top:123.84px;font-size:15.5px;line-height:15.5px;color:#000;transform:scaleX(0.8637);transform-origin:0 0;">100.0</div>
<div class="a" style="left:1058.70px;top:123.84px;font-size:15.5px;line-height:15.5px;color:#000;transform:scaleX(0.8637);transform-origin:0 0;">100.0</div>
<div class="a" style="left:33.50px;top:94.98px;font-size:15.5px;line-height:15.5px;color:#000;transform:scaleX(0.8637);transform-origin:0 0;">105.0</div>
<div class="a" style="left:1058.70px;top:94.98px;font-size:15.5px;line-height:15.5px;color:#000;transform:scaleX(0.8637);transform-origin:0 0;">105.0</div>
<svg class="a" style="left:0;top:0" width="1280" height="760"><path d="M1051 708.5H1057M1051 679.5H1057M1051 650.5H1057M1051 622.5H1057M1051 593.5H1057M1051 564.5H1057M1051 535.5H1057M1051 506.5H1057M1051 477.5H1057M1051 448.5H1057M1051 420.5H1057M1051 391.5H1057M1051 362.5H1057M1051 333.5H1057M1051 304.5H1057M1051 275.5H1057M1051 246.5H1057M1051 218.5H1057M1051 189.5H1057M1051 160.5H1057M1051 131.5H1057M1051 102.5H1057" stroke="#000" stroke-width="1"/></svg>
<div class="a" style="left:63.05px;top:716.88px;font-size:15.5px;line-height:15.5px;color:#000;transform:scaleX(0.8787);transform-origin:0 0;">1000</div>
<div class="a" style="left:103.05px;top:716.88px;font-size:15.5px;line-height:15.5px;color:#000;transform:scaleX(0.8787);transform-origin:0 0;">1250</div>
<div class="a" style="left:144.05px;top:716.88px;font-size:15.5px;line-height:15.5px;color:#000;transform:scaleX(0.8787);transform-origin:0 0;">1500</div>
<div class="a" style="left:184.05px;top:716.88px;font-size:15.5px;line-height:15.5px;color:#000;transform:scaleX(0.8787);transform-origin:0 0;">1750</div>
<div class="a" style="left:225.05px;top:716.88px;font-size:15.5px;line-height:15.5px;color:#000;transform:scaleX(0.8787);transform-origin:0 0;">2000</div>
<div class="a" style="left:265.05px;top:716.88px;font-size:15.5px;line-height:15.5px;color:#000;transform:scaleX(0.8787);transform-origin:0 0;">2250</div>
<div class="a" style="left:306.05px;top:716.88px;font-size:15.5px;line-height:15.5px;color:#000;transform:scaleX(0.8787);transform-origin:0 0;">2500</div>
<div class="a" style="left:346.05px;top:716.88px;font-size:15.5px;line-height:15.5px;color:#000;transform:scaleX(0.8787);transform-origin:0 0;">2750</div>
<div class="a" style="left:386.05px;top:716.88px;font-size:15.5px;line-height:15.5px;color:#000;transform:scaleX(0.8787);transform-origin:0 0;">3000</div>
<div class="a" style="left:427.05px;top:716.88px;font-size:15.5px;line-height:15.5px;color:#000;transform:scaleX(0.8787);transform-origin:0 0;">3250</div>
<div class="a" style="left:467.05px;top:716.88px;font-size:15.5px;line-height:15.5px;color:#000;transform:scaleX(0.8787);transform-origin:0 0;">3500</div>
<div class="a" style="left:508.05px;top:716.88px;font-size:15.5px;line-height:15.5px;color:#000;transform:scaleX(0.8787);transform-origin:0 0;">3750</div>
<div class="a" style="left:548.05px;top:716.88px;font-size:15.5px;line-height:15.5px;color:#000;transform:scaleX(0.8787);transform-origin:0 0;">4000</div>
<div class="a" style="left:589.05px;top:716.88px;font-size:15.5px;line-height:15.5px;color:#000;transform:scaleX(0.8787);transform-origin:0 0;">4250</div>
<div class="a" style="left:629.05px;top:716.88px;font-size:15.5px;line-height:15.5px;color:#000;transform:scaleX(0.8787);transform-origin:0 0;">4500</div>
<div class="a" style="left:669.05px;top:716.88px;font-size:15.5px;line-height:15.5px;color:#000;transform:scaleX(0.8787);transform-origin:0 0;">4750</div>
<div class="a" style="left:710.05px;top:716.88px;font-size:15.5px;line-height:15.5px;color:#000;transform:scaleX(0.8787);transform-origin:0 0;">5000</div>
<div class="a" style="left:750.05px;top:716.88px;font-size:15.5px;line-height:15.5px;color:#000;transform:scaleX(0.8787);transform-origin:0 0;">5250</div>
<div class="a" style="left:791.05px;top:716.88px;font-size:15.5px;line-height:15.5px;color:#000;transform:scaleX(0.8787);transform-origin:0 0;">5500</div>
<div class="a" style="left:831.05px;top:716.88px;font-size:15.5px;line-height:15.5px;color:#000;transform:scaleX(0.8787);transform-origin:0 0;">5750</div>
<div class="a" style="left:871.05px;top:716.88px;font-size:15.5px;line-height:15.5px;color:#000;transform:scaleX(0.8787);transform-origin:0 0;">6000</div>
<div class="a" style="left:912.05px;top:716.88px;font-size:15.5px;line-height:15.5px;color:#000;transform:scaleX(0.8787);transform-origin:0 0;">6250</div>
<div class="a" style="left:952.05px;top:716.88px;font-size:15.5px;line-height:15.5px;color:#000;transform:scaleX(0.8787);transform-origin:0 0;">6500</div>
<div class="a" style="left:993.05px;top:716.88px;font-size:15.5px;line-height:15.5px;color:#000;transform:scaleX(0.8787);transform-origin:0 0;">6750</div>
<div class="a" style="left:1033.05px;top:716.88px;font-size:15.5px;line-height:15.5px;color:#000;transform:scaleX(0.8787);transform-origin:0 0;">7000</div>
<div class="a" style="left:507.00px;top:738.15px;font-size:14px;line-height:14px;color:#000;">Revolutions (rpm)</div>
<div class="a" style="left:20px;top:405px;width:0;height:0"><div class="a" style="left:0;top:0;transform:translate(-50%,-50%) rotate(-90deg);font-size:14px;line-height:14px">SAE Wheel Power (hp)</div></div>
<div class="a" style="left:1106px;top:405px;width:0;height:0"><div class="a" style="left:0;top:0;transform:translate(-50%,-50%) rotate(90deg);font-size:14px;line-height:14px">SAE Torque (ft-lbs)</div></div>
<div class="a" style="left:10px;top:692px;width:24px;height:22px;background:#ff33ff;border-right:2px solid #000;border-bottom:2px solid #000;border-top:1px solid #ff88ff;border-left:1px solid #ff88ff"></div>
<svg class="a" style="left:17px;top:698px" width="10" height="10"><path d="M2.5 1.5L6.5 5L2.5 8.5" fill="none" stroke="#000" stroke-width="1.5"/></svg>
<div class="a" style="left:1107px;top:99px;width:18px;height:18px;background:#22ee22;border-right:2px solid #000;border-bottom:2px solid #000;border-top:1px solid #aaffaa;border-left:1px solid #aaffaa"></div>
<svg class="a" style="left:1110px;top:102px" width="12" height="12"><path d="M1.5 2.5H10.5L7 6.5V9L5 8V6.5Z" fill="#000"/></svg>
<div class="a" style="left:1272px;top:48px;width:1px;height:944px;background:#909090;box-shadow:-1px 0 0 #fafafa"></div>
<div class="a" style="left:10px;top:991px;width:1263px;height:1px;background:#909090"></div>
<div class="a" style="left:1129px;top:95px;width:137px;height:886px;border:2px solid #000;border-left-width:2.5px;box-shadow:inset -1px -1px 0 #fff"></div>
<div class="lb" style="left:1163px;top:88px;width:95px;height:14px"></div>
<div class="a" style="left:1164.00px;top:87.15px;font-size:14px;line-height:14px;font-weight:bold;color:#000;letter-spacing:0.5px;transform:scaleX(1.1064);transform-origin:0 0;">Graph tools</div>
<div class="a" style="left:1135px;top:114px;width:117px;height:110px;border:1px solid #a8a8a8;box-shadow:1px 1px 0 #fff, 2px 2px 0 #f4f4f4, inset 1px 1px 0 #fff"></div>
<div class="lb" style="left:1141px;top:103px;width:123px;height:18px"></div>
<div class="a" style="left:1143.00px;top:105.15px;font-size:14px;line-height:14px;font-weight:bold;color:#000;letter-spacing:0.5px;transform:scaleX(1.1151);transform-origin:0 0;">Current Values</div>
<div class="a" style="left:1149.00px;top:123.15px;font-size:14px;line-height:14px;font-weight:bold;color:#000;letter-spacing:-0.3px;transform:scaleX(0.9125);transform-origin:0 0;">rpm: 5818.6</div>
<div class="a" style="left:1149.00px;top:142.15px;font-size:14px;line-height:14px;font-weight:bold;color:#000;letter-spacing:-0.3px;transform:scaleX(0.8994);transform-origin:0 0;">ft-lbs: 9.2</div>
<div class="a" style="left:1149.00px;top:161.15px;font-size:14px;line-height:14px;font-weight:bold;color:#000;letter-spacing:-0.3px;transform:scaleX(0.9066);transform-origin:0 0;">hp: 9.2</div>
<div class="a" style="left:1149px;top:194px;width:7px;height:2px;background:#000"></div>
<div class="a" style="left:1149px;top:213px;width:7px;height:2px;background:#000"></div>
<div class="lb" style="left:1140px;top:227px;width:86px;height:18px;border:1px dotted #222"></div>
<div class="a" style="left:1142.00px;top:229.15px;font-size:14px;line-height:14px;font-weight:bold;color:#000;letter-spacing:0.5px;transform:scaleX(1.0820);transform-origin:0 0;">Correction</div>
<div class="a" style="left:1136px;top:248px;width:120px;height:21px;background:#fff;border:1px solid #e8e8e8;border-top:2px solid #a8a8a8;border-left:2px solid #a8a8a8;box-shadow:1px 1px 0 #707070"></div>
<div class="a" style="left:1235px;top:249px;width:20px;height:19px;background:linear-gradient(135deg,#f0f0f0,#dcdcdc 60%,#b8b8b8);border-right:1px solid #777;border-bottom:1px solid #777"></div>
<svg class="a" style="left:1237px;top:253px" width="16" height="10"><path d="M1 1.2H14.8L8 8Z" fill="#111"/></svg>
<div class="a" style="left:1173.65px;top:252.00px;font-size:13px;line-height:13px;color:#000;transform:scaleX(0.9802);transform-origin:0 0;">SAE</div>
<div class="a" style="left:1136px;top:284px;width:116px;height:104px;border:1px solid #a8a8a8;box-shadow:1px 1px 0 #fff, 2px 2px 0 #f4f4f4, inset 1px 1px 0 #fff"></div>
<div class="lb" style="left:1150px;top:275px;width:72px;height:16px"></div>
<div class="a" style="left:1152.00px;top:276.15px;font-size:14px;line-height:14px;font-weight:bold;color:#000;letter-spacing:0.5px;transform:scaleX(1.1023);transform-origin:0 0;">Zooming</div>
<div class="a" style="left:1148px;top:298px;width:38px;height:37px;background:#c8c8c8;border:1px solid #5a5a5a;box-shadow:inset 1px 1px 0 #f0f0f0, inset -1px -1px 0 #a0a0a0"></div>
<svg class="a" style="left:1148px;top:298px" width="38" height="37" viewBox="0 0 38 37"><ellipse cx="14.6" cy="14.9" rx="9.3" ry="9.8" fill="#cdcdcd" stroke="#444" stroke-width="1"/><path d="M9 10.5 Q11 7.5 14 7" stroke="#f0f0f0" stroke-width="2" fill="none"/><path d="M24.2 12V19" stroke="#555" stroke-width="2"/><path d="M11 26.5H17.5" stroke="#555" stroke-width="1.6"/><path d="M23 24.5L30.5 31.5" stroke="#333" stroke-width="5" stroke-linecap="round"/><path d="M23 24.5L30.5 31.5" stroke="#44e0e8" stroke-width="3" stroke-linecap="round"/><path d="M8.5 14.5H21" stroke="#5a5a5a" stroke-width="3.2"/><path d="M14.7 8.5V21.5" stroke="#5a5a5a" stroke-width="3.2"/></svg>
<div class="a" style="left:1188px;top:298px;width:38px;height:37px;background:#c8c8c8;border:1px solid #5a5a5a;box-shadow:inset 1px 1px 0 #f0f0f0, inset -1px -1px 0 #a0a0a0"></div>
<svg class="a" style="left:1188px;top:298px" width="38" height="37" viewBox="0 0 38 37"><ellipse cx="14.6" cy="14.9" rx="9.3" ry="9.8" fill="#cdcdcd" stroke="#444" stroke-width="1"/><path d="M9 10.5 Q11 7.5 14 7" stroke="#f0f0f0" stroke-width="2" fill="none"/><path d="M24.2 12V19" stroke="#555" stroke-width="2"/><path d="M11 26.5H17.5" stroke="#555" stroke-width="1.6"/><path d="M23 24.5L30.5 31.5" stroke="#333" stroke-width="5" stroke-linecap="round"/><path d="M23 24.5L30.5 31.5" stroke="#44e0e8" stroke-width="3" stroke-linecap="round"/><path d="M8.5 14.5H21" stroke="#5a5a5a" stroke-width="3.2"/></svg>
<div class="chk" style="left:1146px;top:343px"></div>
<div class="a" style="left:1167.00px;top:343.15px;font-size:14px;line-height:14px;color:#000;transform:scaleX(0.9522);transform-origin:0 0;">Point snap</div>
<div class="chk" style="left:1146px;top:363px"></div>
<div class="a" style="left:1167.00px;top:362.15px;font-size:14px;line-height:14px;color:#000;transform:scaleX(1.0124);transform-origin:0 0;">Zoom Tools</div>
<div class="a" style="left:1136px;top:405px;width:116px;height:82px;border:1px solid #a8a8a8;box-shadow:1px 1px 0 #fff, 2px 2px 0 #f4f4f4, inset 1px 1px 0 #fff"></div>
<div class="lb" style="left:1151px;top:398px;width:89px;height:16px"></div>
<div class="a" style="left:1153.00px;top:398.15px;font-size:14px;line-height:14px;font-weight:bold;color:#000;letter-spacing:0.5px;transform:scaleX(1.1083);transform-origin:0 0;">Smoothing</div>
<div class="radio on" style="left:1145px;top:419px"></div>
<div class="a" style="left:1167.00px;top:419.15px;font-size:14px;line-height:14px;font-weight:bold;color:#ff0000;transform:scaleX(1.1108);transform-origin:0 0;">hp</div>
<div class="radio" style="left:1197px;top:419px"></div>
<div class="a" style="left:1219.00px;top:419.15px;font-size:14px;line-height:14px;font-weight:bold;color:#0000ff;transform:scaleX(1.2164);transform-origin:0 0;">AFR</div>
<div class="a" style="left:1150px;top:449px;width:95px;height:8px;background:#808080;border-radius:4px;box-shadow:inset 0 1px 0 #999"></div>
<svg class="a" style="left:1146px;top:443px" width="13" height="20"><path d="M1.5 1.5H11.5V10L6.5 18.5L1.5 10Z" fill="#ee0000" stroke="#aa0000" stroke-width="1"/></svg>
<svg class="a" style="left:1140px;top:460px" width="110" height="12"><path d="M12.0 3V9M29.5 3V9M47.5 3V9M65.0 3V9M83.0 3V9M101.0 3V9" stroke="#000" stroke-width="1"/></svg>
<div class="a" style="left:1148.50px;top:470.00px;font-size:13px;line-height:13px;color:#000;transform:scaleX(0.9682);transform-origin:0 0;">0</div>
<div class="a" style="left:1166.00px;top:470.00px;font-size:13px;line-height:13px;color:#000;transform:scaleX(0.9682);transform-origin:0 0;">1</div>
<div class="a" style="left:1184.00px;top:470.00px;font-size:13px;line-height:13px;color:#000;transform:scaleX(0.9682);transform-origin:0 0;">2</div>
<div class="a" style="left:1201.50px;top:470.00px;font-size:13px;line-height:13px;color:#000;transform:scaleX(0.9682);transform-origin:0 0;">3</div>
<div class="a" style="left:1219.50px;top:470.00px;font-size:13px;line-height:13px;color:#000;transform:scaleX(0.9682);transform-origin:0 0;">4</div>
<div class="a" style="left:1237.50px;top:470.00px;font-size:13px;line-height:13px;color:#000;transform:scaleX(0.9682);transform-origin:0 0;">5</div>
<div class="a" style="left:1136px;top:503px;width:116px;height:128px;border:1px solid #a8a8a8;box-shadow:1px 1px 0 #fff, 2px 2px 0 #f4f4f4, inset 1px 1px 0 #fff"></div>
<div class="lb" style="left:1150px;top:496px;width:103px;height:12px"></div>
<div class="a" style="left:1152.00px;top:494.15px;font-size:14px;line-height:14px;font-weight:bold;color:#000;letter-spacing:0.5px;transform:scaleX(1.2757);transform-origin:0 0;">Left Y-Axis</div>
<div class="radio on" style="left:1145px;top:517px"></div>
<div class="a" style="left:1167.00px;top:516.15px;font-size:14px;line-height:14px;color:#000;transform:scaleX(0.9792);transform-origin:0 0;">Show Grid</div>
<div class="radio" style="left:1145px;top:538px"></div>
<div class="a" style="left:1167.00px;top:537.15px;font-size:14px;line-height:14px;color:#000;transform:scaleX(0.9596);transform-origin:0 0;">Autoscale</div>
<div class="radio on" style="left:1145px;top:559px"></div>
<div class="a" style="left:1167.00px;top:558.15px;font-size:14px;line-height:14px;color:#000;transform:scaleX(0.9582);transform-origin:0 0;">Manual</div>
<div class="a" style="left:1153.00px;top:584.00px;font-size:13px;line-height:13px;color:#000;transform:scaleX(1.0502);transform-origin:0 0;">Min</div>
<div class="a" style="left:1201.00px;top:584.00px;font-size:13px;line-height:13px;color:#000;transform:scaleX(1.0179);transform-origin:0 0;">Max</div>
<div class="inp" style="left:1145px;top:599px;width:38px;height:25px"></div>
<div class="a" style="left:1171.00px;top:606.00px;font-size:13px;line-height:13px;color:#000;transform:scaleX(0.9682);transform-origin:0 0;">0</div>
<div class="inp" style="left:1196px;top:599px;width:38px;height:25px"></div>
<div class="a" style="left:1207.00px;top:605.00px;font-size:13px;line-height:13px;color:#000;transform:scaleX(1.0143);transform-origin:0 0;">105</div>
<div class="a" style="left:1136px;top:645px;width:116px;height:131px;border:1px solid #a8a8a8;box-shadow:1px 1px 0 #fff, 2px 2px 0 #f4f4f4, inset 1px 1px 0 #fff"></div>
<div class="lb" style="left:1150px;top:639px;width:103px;height:13px"></div>
<div class="a" style="left:1152.00px;top:637.15px;font-size:14px;line-height:14px;font-weight:bold;color:#000;letter-spacing:0.5px;transform:scaleX(1.1337);transform-origin:0 0;">Right Y-Axis</div>
<div class="radio" style="left:1145px;top:658px"></div>
<div class="a" style="left:1167.00px;top:658.15px;font-size:14px;line-height:14px;color:#000;transform:scaleX(0.9792);transform-origin:0 0;">Show Grid</div>
<div class="radio" style="left:1145px;top:678px"></div>
<div class="a" style="left:1167.00px;top:678.15px;font-size:14px;line-height:14px;color:#000;transform:scaleX(0.9558);transform-origin:0 0;">AutoScale</div>
<div class="radio on" style="left:1145px;top:700px"></div>
<div class="a" style="left:1167.00px;top:700.15px;font-size:14px;line-height:14px;color:#000;transform:scaleX(0.9582);transform-origin:0 0;">Manual</div>
<div class="a" style="left:1153.00px;top:726.00px;font-size:13px;line-height:13px;color:#000;transform:scaleX(1.0502);transform-origin:0 0;">Min</div>
<div class="a" style="left:1201.00px;top:726.00px;font-size:13px;line-height:13px;color:#000;transform:scaleX(1.0179);transform-origin:0 0;">Max</div>
<div class="inp" style="left:1145px;top:741px;width:38px;height:24px"></div>
<div class="a" style="left:1171.00px;top:747.00px;font-size:13px;line-height:13px;color:#000;transform:scaleX(0.9682);transform-origin:0 0;">0</div>
<div class="inp" style="left:1196px;top:741px;width:38px;height:24px"></div>
<div class="a" style="left:1207.00px;top:747.00px;font-size:13px;line-height:13px;color:#000;transform:scaleX(1.0143);transform-origin:0 0;">105</div>
<div class="a" style="left:1136px;top:794px;width:116px;height:167px;border:1px solid #a8a8a8;box-shadow:1px 1px 0 #fff, 2px 2px 0 #f4f4f4, inset 1px 1px 0 #fff"></div>
<div class="lb" style="left:1150px;top:784px;width:54px;height:17px"></div>
<div class="a" style="left:1151.00px;top:786.15px;font-size:14px;line-height:14px;font-weight:bold;color:#000;letter-spacing:0.5px;transform:scaleX(1.1526);transform-origin:0 0;">X-axis</div>
<div class="radio on" style="left:1146px;top:808px"></div>
<div class="a" style="left:1167.00px;top:808.15px;font-size:14px;line-height:14px;color:#000;transform:scaleX(0.9321);transform-origin:0 0;">RPM</div>
<div class="radio" style="left:1146px;top:829px"></div>
<div class="a" style="left:1167.00px;top:828.15px;font-size:14px;line-height:14px;color:#000;transform:scaleX(0.9880);transform-origin:0 0;">Speed</div>
<div class="radio" style="left:1146px;top:849px"></div>
<div class="a" style="left:1167.00px;top:849.15px;font-size:14px;line-height:14px;color:#000;transform:scaleX(1.0133);transform-origin:0 0;">Time</div>
<div class="a" style="left:1148px;top:866px;width:70px;height:1px;background:#f8f8f8"></div>
<div class="radio on" style="left:1146px;top:877px"></div>
<div class="a" style="left:1167.00px;top:877.15px;font-size:14px;line-height:14px;color:#000;transform:scaleX(0.9558);transform-origin:0 0;">AutoScale</div>
<div class="radio" style="left:1146px;top:898px"></div>
<div class="a" style="left:1167.00px;top:899.15px;font-size:14px;line-height:14px;color:#000;transform:scaleX(0.9582);transform-origin:0 0;">Manual</div>
<div class="a" style="left:1153.00px;top:918.00px;font-size:13px;line-height:13px;color:#a0a0a0;transform:scaleX(1.0502);transform-origin:0 0;">Min</div>
<div class="a" style="left:1201.00px;top:918.00px;font-size:13px;line-height:13px;color:#a0a0a0;transform:scaleX(1.0179);transform-origin:0 0;">Max</div>
<div class="inp" style="left:1146px;top:932px;width:37px;height:24px;background:#e4e4e4;border-color:#f4f4f4;border-top-color:#bdbdbd;border-left-color:#bdbdbd"></div>
<div class="a" style="left:1171.00px;top:939.00px;font-size:13px;line-height:13px;color:#909090;transform:scaleX(0.9682);transform-origin:0 0;">0</div>
<div class="inp" style="left:1197px;top:932px;width:42px;height:24px;background:#e4e4e4;border-color:#f4f4f4;border-top-color:#bdbdbd;border-left-color:#bdbdbd"></div>
<div class="a" style="left:1202.00px;top:939.00px;font-size:13px;line-height:13px;color:#909090;transform:scaleX(0.9128);transform-origin:0 0;">10000</div>
<div class="a" style="left:31px;top:774px;width:1095px;height:217px;background:#fff"></div>
<div class="a" style="left:33px;top:753px;width:1093px;height:22px;background:#00ccff;border-bottom:2px solid #000;border-top:1px solid #60e8ff"></div>
<div class="a" style="left:10px;top:751px;width:24px;height:23px;background:#ff9900;border-top:2px solid #000;border-left:2px solid #000;border-right:1px solid #ffd890;border-bottom:1px solid #ffd890"></div>
<svg class="a" style="left:16px;top:757px" width="12" height="12"><path d="M8 2L4 6L8 10" fill="none" stroke="#000" stroke-width="1.6"/></svg>
<div class="a" style="left:109.00px;top:755.57px;font-size:13.5px;line-height:13.5px;color:#000;transform:scaleX(1.0145);transform-origin:0 0;">Run File</div>
<div class="a" style="left:335.75px;top:755.57px;font-size:13.5px;line-height:13.5px;color:#000;transform:scaleX(1.0417);transform-origin:0 0;">Run Title</div>
<div class="a" style="left:500.75px;top:755.57px;font-size:13.5px;line-height:13.5px;color:#000;transform:scaleX(1.0528);transform-origin:0 0;">AirP(in.Hg)</div>
<div class="a" style="left:584.25px;top:755.57px;font-size:13.5px;line-height:13.5px;color:#000;">AirT(°F)</div>
<div class="a" style="left:645.50px;top:755.57px;font-size:13.5px;line-height:13.5px;color:#000;transform:scaleX(0.9844);transform-origin:0 0;">CF SAE</div>
<div class="a" style="left:738.00px;top:755.57px;font-size:13.5px;line-height:13.5px;color:#000;transform:scaleX(1.0232);transform-origin:0 0;">Date &amp; Time</div>
<div class="a" style="left:906.50px;top:755.57px;font-size:13.5px;line-height:13.5px;color:#000;transform:scaleX(1.0152);transform-origin:0 0;">Maximum Rates</div>
<div class="a" style="left:1078.25px;top:755.57px;font-size:13.5px;line-height:13.5px;color:#000;transform:scaleX(1.0312);transform-origin:0 0;">Ratio</div>
<div class="a" style="left:236px;top:753px;width:2px;height:21px;background:#000"></div>
<div class="a" style="left:491px;top:753px;width:2px;height:21px;background:#000"></div>
<div class="a" style="left:580px;top:753px;width:2px;height:21px;background:#000"></div>
<div class="a" style="left:636px;top:753px;width:2px;height:21px;background:#000"></div>
<div class="a" style="left:703px;top:753px;width:2px;height:21px;background:#000"></div>
<div class="a" style="left:849px;top:753px;width:2px;height:21px;background:#000"></div>
<div class="a" style="left:1063px;top:753px;width:2px;height:21px;background:#000"></div>
<div class="a" style="left:1124px;top:753px;width:2px;height:22px;background:#000"></div>
<div class="a" style="left:1127px;top:753px;width:1px;height:22px;background:#000"></div>
<svg class="a" style="left:0;top:0" width="1280" height="1000"><path d="M31 792.5H1108M31 810.5H1108M31 828.5H1108M31 846.5H1108M31 864.5H1108M31 882.5H1108M31 900.5H1108M31 918.5H1108M31 936.5H1108M31 954.5H1108M31 972.5H1108M31 990.5H1108M236.5 775V991M491.5 775V991M580.5 775V991M636.5 775V991M703.5 775V991M849.5 775V991" stroke="#dcdcdc" stroke-width="1" fill="none"/></svg>
<div class="a" style="left:12px;top:774px;width:16px;height:207px;background:#00ff99"></div>
<div class="a" style="left:15px;top:779px;width:11px;height:8px;background:#000;box-shadow:inset 0 0 0 1px #000, inset 0 0 0 2px #00ff99"></div>
<div class="a" style="left:15px;top:797px;width:11px;height:8px;background:#000;box-shadow:inset 0 0 0 1px #000, inset 0 0 0 2px #00ff99"></div>
<div class="a" style="left:15px;top:815px;width:11px;height:8px;background:#000;box-shadow:inset 0 0 0 1px #000, inset 0 0 0 2px #00ff99"></div>
<div class="a" style="left:33.00px;top:777.00px;font-size:13px;line-height:13px;color:#0000c4;transform:scaleX(0.9396);transform-origin:0 0;">Johnny Beasley 96.003</div>
<div class="a" style="left:238.00px;top:777.00px;font-size:13px;line-height:13px;color:#0000c4;transform:scaleX(0.9436);transform-origin:0 0;">2008,uc,96,a48,cob21,hpiab,stktbic</div>
<div class="a" style="left:520.50px;top:777.00px;font-size:13px;line-height:13px;color:#0000c4;transform:scaleX(0.9529);transform-origin:0 0;">29.49</div>
<div class="a" style="left:598.00px;top:777.00px;font-size:13px;line-height:13px;color:#0000c4;transform:scaleX(0.7904);transform-origin:0 0;">75.1</div>
<div class="a" style="left:654.50px;top:777.00px;font-size:13px;line-height:13px;color:#0000c4;transform:scaleX(0.9820);transform-origin:0 0;">1.011</div>
<div class="a" style="left:705.00px;top:777.00px;font-size:13px;line-height:13px;color:#0000c4;transform:scaleX(0.9458);transform-origin:0 0;">17-04-2017 / 10:13:24</div>
<div class="a" style="left:851px;top:776px;width:211px;height:16px;overflow:hidden">
<div class="a" style="left:0.00px;top:1.00px;font-size:13px;line-height:13px;color:#0000c4;transform:scaleX(0.9673);transform-origin:0 0;">81.6Hp@ 5111rpm / 101.5ft-lbs@ 3105</div>
</div>
<div class="a" style="left:1076.00px;top:777.00px;font-size:13px;line-height:13px;color:#000;transform:scaleX(0.9407);transform-origin:0 0;">1.0</div>
<div class="a" style="left:33.00px;top:795.00px;font-size:13px;line-height:13px;color:#ff0000;transform:scaleX(0.9396);transform-origin:0 0;">Johnny Beasley 96.002</div>
<div class="a" style="left:238.00px;top:795.00px;font-size:13px;line-height:13px;color:#ff0000;transform:scaleX(0.9436);transform-origin:0 0;">2008,uc,96,a48,cob21,hpiab,stktbic</div>
<div class="a" style="left:520.50px;top:795.00px;font-size:13px;line-height:13px;color:#ff0000;transform:scaleX(0.9529);transform-origin:0 0;">29.51</div>
<div class="a" style="left:598.00px;top:795.00px;font-size:13px;line-height:13px;color:#ff0000;transform:scaleX(0.7904);transform-origin:0 0;">75.1</div>
<div class="a" style="left:654.50px;top:795.00px;font-size:13px;line-height:13px;color:#ff0000;transform:scaleX(0.9529);transform-origin:0 0;">1.009</div>
<div class="a" style="left:705.00px;top:795.00px;font-size:13px;line-height:13px;color:#ff0000;transform:scaleX(0.9458);transform-origin:0 0;">17-04-2017 / 10:13:01</div>
<div class="a" style="left:851px;top:794px;width:211px;height:16px;overflow:hidden">
<div class="a" style="left:0.00px;top:1.00px;font-size:13px;line-height:13px;color:#ff0000;transform:scaleX(0.9591);transform-origin:0 0;">79.7Hp@ 4901rpm / 100.6ft-lbs@ 3083</div>
</div>
<div class="a" style="left:1076.00px;top:795.00px;font-size:13px;line-height:13px;color:#000;transform:scaleX(0.9407);transform-origin:0 0;">1.0</div>
<div class="a" style="left:33.00px;top:813.00px;font-size:13px;line-height:13px;color:#00b400;transform:scaleX(0.9396);transform-origin:0 0;">Johnny Beasley 96.001</div>
<div class="a" style="left:238.00px;top:813.00px;font-size:13px;line-height:13px;color:#00b400;transform:scaleX(0.9436);transform-origin:0 0;">2008,uc,96,a48,cob21,hpiab,stktbic</div>
<div class="a" style="left:520.50px;top:813.00px;font-size:13px;line-height:13px;color:#00b400;transform:scaleX(0.9529);transform-origin:0 0;">29.50</div>
<div class="a" style="left:598.00px;top:813.00px;font-size:13px;line-height:13px;color:#00b400;transform:scaleX(0.7904);transform-origin:0 0;">75.1</div>
<div class="a" style="left:654.50px;top:813.00px;font-size:13px;line-height:13px;color:#00b400;transform:scaleX(0.9529);transform-origin:0 0;">1.009</div>
<div class="a" style="left:705.00px;top:813.00px;font-size:13px;line-height:13px;color:#00b400;transform:scaleX(0.9458);transform-origin:0 0;">17-04-2017 / 10:12:38</div>
<div class="a" style="left:851px;top:812px;width:211px;height:16px;overflow:hidden">
<div class="a" style="left:0.00px;top:1.00px;font-size:13px;line-height:13px;color:#00b400;transform:scaleX(0.9591);transform-origin:0 0;">80.7Hp@ 4909rpm / 100.6ft-lbs@ 3063</div>
</div>
<div class="a" style="left:1076.00px;top:813.00px;font-size:13px;line-height:13px;color:#000;transform:scaleX(0.9407);transform-origin:0 0;">1.0</div>
<div class="a" style="left:1109px;top:775.0px;width:16px;height:17px;background:#ececec;border-top:1px solid #fff;border-left:1px solid #fff;border-right:2px solid #000;border-bottom:2px solid #000"></div>
<svg class="a" style="left:1109px;top:775.0px" width="16" height="17"><path d="M1.5 3.5H15L8.2 11.5Z" fill="#000"/></svg>
<div class="a" style="left:1109px;top:793.0px;width:16px;height:17px;background:#ececec;border-top:1px solid #fff;border-left:1px solid #fff;border-right:2px solid #000;border-bottom:2px solid #000"></div>
<svg class="a" style="left:1109px;top:793.0px" width="16" height="17"><path d="M1.5 3.5H15L8.2 11.5Z" fill="#000"/></svg>
<div class="a" style="left:1109px;top:811.0px;width:16px;height:17px;background:#ececec;border-top:1px solid #fff;border-left:1px solid #fff;border-right:2px solid #000;border-bottom:2px solid #000"></div>
<svg class="a" style="left:1109px;top:811.0px" width="16" height="17"><path d="M1.5 3.5H15L8.2 11.5Z" fill="#000"/></svg>
<div class="a" style="left:1109px;top:829.0px;width:16px;height:17px;background:#ececec;border-top:1px solid #fff;border-left:1px solid #fff;border-right:2px solid #000;border-bottom:2px solid #000"></div>
<svg class="a" style="left:1109px;top:829.0px" width="16" height="17"><path d="M1.5 3.5H15L8.2 11.5Z" fill="#000"/></svg>
<div class="a" style="left:1109px;top:847.0px;width:16px;height:17px;background:#ececec;border-top:1px solid #fff;border-left:1px solid #fff;border-right:2px solid #000;border-bottom:2px solid #000"></div>
<svg class="a" style="left:1109px;top:847.0px" width="16" height="17"><path d="M1.5 3.5H15L8.2 11.5Z" fill="#000"/></svg>
<div class="a" style="left:1109px;top:865.0px;width:16px;height:17px;background:#ececec;border-top:1px solid #fff;border-left:1px solid #fff;border-right:2px solid #000;border-bottom:2px solid #000"></div>
<svg class="a" style="left:1109px;top:865.0px" width="16" height="17"><path d="M1.5 3.5H15L8.2 11.5Z" fill="#000"/></svg>
<div class="a" style="left:1109px;top:883.0px;width:16px;height:17px;background:#ececec;border-top:1px solid #fff;border-left:1px solid #fff;border-right:2px solid #000;border-bottom:2px solid #000"></div>
<svg class="a" style="left:1109px;top:883.0px" width="16" height="17"><path d="M1.5 3.5H15L8.2 11.5Z" fill="#000"/></svg>
<div class="a" style="left:1109px;top:901.0px;width:16px;height:17px;background:#ececec;border-top:1px solid #fff;border-left:1px solid #fff;border-right:2px solid #000;border-bottom:2px solid #000"></div>
<svg class="a" style="left:1109px;top:901.0px" width="16" height="17"><path d="M1.5 3.5H15L8.2 11.5Z" fill="#000"/></svg>
<div class="a" style="left:1109px;top:919.0px;width:16px;height:17px;background:#ececec;border-top:1px solid #fff;border-left:1px solid #fff;border-right:2px solid #000;border-bottom:2px solid #000"></div>
<svg class="a" style="left:1109px;top:919.0px" width="16" height="17"><path d="M1.5 3.5H15L8.2 11.5Z" fill="#000"/></svg>
<div class="a" style="left:1109px;top:937.0px;width:16px;height:17px;background:#ececec;border-top:1px solid #fff;border-left:1px solid #fff;border-right:2px solid #000;border-bottom:2px solid #000"></div>
<svg class="a" style="left:1109px;top:937.0px" width="16" height="17"><path d="M1.5 3.5H15L8.2 11.5Z" fill="#000"/></svg>
<div class="a" style="left:1109px;top:955.0px;width:16px;height:17px;background:#ececec;border-top:1px solid #fff;border-left:1px solid #fff;border-right:2px solid #000;border-bottom:2px solid #000"></div>
<svg class="a" style="left:1109px;top:955.0px" width="16" height="17"><path d="M1.5 3.5H15L8.2 11.5Z" fill="#000"/></svg>
<div class="a" style="left:1109px;top:973.0px;width:16px;height:17px;background:#ececec;border-top:1px solid #fff;border-left:1px solid #fff;border-right:2px solid #000;border-bottom:2px solid #000"></div>
<svg class="a" style="left:1109px;top:973.0px" width="16" height="17"><path d="M1.5 3.5H15L8.2 11.5Z" fill="#000"/></svg>
<div class="a" style="left:1125px;top:775px;width:4px;height:216px;background:#fff"></div>
<div class="a" style="left:0;top:993px;width:1280px;height:31px;background:linear-gradient(#3c81f3 0px,#2f6fe8 2px,#245edb 5px,#245edb 26px,#1a4fc4 31px)"></div>
<div class="a" style="left:0;top:994px;width:97px;height:30px;border-radius:3px 14px 10px 0;background:linear-gradient(#2e8a2e 0px,#52b452 3px,#3fa43f 8px,#379a37 22px,#2c842c 30px);box-shadow:1px 0 1px #1a4a1a"></div>
<svg class="a" style="left:10px;top:999px" width="20" height="20" viewBox="0 0 20 20"><g transform="skewY(8) translate(0,-1)"><path d="M3 3Q6 1.5 10 3L9 9Q5.5 7.5 2 9Z" fill="#f05a20"/><path d="M11 3.2Q14 4.5 18 3L17 9Q13.5 10.5 10 9.2Z" fill="#50c030"/><path d="M2 10Q5.5 8.5 9 10L8 16Q4.5 14.5 1 16Z" fill="#3a7cf0"/><path d="M10 10.2Q13.5 11.5 17 10L16 16Q12.5 17.5 9 16.2Z" fill="#f8c818"/></g></svg>
<div class="a" style="left:34.00px;top:1000.76px;font-size:18px;line-height:18px;font-weight:bold;color:#fff;transform:scaleX(0.9739);transform-origin:0 0;font-style:italic;text-shadow:1px 1px 1px #1a401a;">start</div>
<div class="a" style="left:106px;top:997px;width:159px;height:24px;background:#1e52c8;border:1px solid #1540a8;border-radius:2px;box-shadow:inset 1px 1px 0 #3a6ee0"></div>
<svg class="a" style="left:116px;top:1000px" width="16" height="16" viewBox="0 0 18 18"><path d="M5.60 3.11A6.8 6.8 0 0 1 9.95 2.27" fill="none" stroke="#5a2008" stroke-width="3.2" stroke-linecap="round"/><path d="M12.40 3.11A6.8 6.8 0 0 1 15.30 6.45" fill="none" stroke="#5a2008" stroke-width="3.2" stroke-linecap="round"/><path d="M15.80 9.00A6.8 6.8 0 0 1 14.36 13.19" fill="none" stroke="#5a2008" stroke-width="3.2" stroke-linecap="round"/><path d="M12.40 14.89A6.8 6.8 0 0 1 8.05 15.73" fill="none" stroke="#5a2008" stroke-width="3.2" stroke-linecap="round"/><path d="M5.60 14.89A6.8 6.8 0 0 1 2.70 11.55" fill="none" stroke="#5a2008" stroke-width="3.2" stroke-linecap="round"/><path d="M2.20 9.00A6.8 6.8 0 0 1 3.64 4.81" fill="none" stroke="#5a2008" stroke-width="3.2" stroke-linecap="round"/><path d="M5.60 3.11A6.8 6.8 0 0 1 9.95 2.27" fill="none" stroke="#f06828" stroke-width="1.8" stroke-linecap="round"/><path d="M12.40 3.11A6.8 6.8 0 0 1 15.30 6.45" fill="none" stroke="#f8c838" stroke-width="1.8" stroke-linecap="round"/><path d="M15.80 9.00A6.8 6.8 0 0 1 14.36 13.19" fill="none" stroke="#f89060" stroke-width="1.8" stroke-linecap="round"/><path d="M12.40 14.89A6.8 6.8 0 0 1 8.05 15.73" fill="none" stroke="#f07030" stroke-width="1.8" stroke-linecap="round"/><path d="M5.60 14.89A6.8 6.8 0 0 1 2.70 11.55" fill="none" stroke="#f8c020" stroke-width="1.8" stroke-linecap="round"/><path d="M2.20 9.00A6.8 6.8 0 0 1 3.64 4.81" fill="none" stroke="#f0a068" stroke-width="1.8" stroke-linecap="round"/><circle cx="9.3" cy="9.3" r="2" fill="none" stroke="#6a3008" stroke-width="2.2"/><circle cx="9.3" cy="9.3" r="2" fill="none" stroke="#f0a020" stroke-width="1.2"/></svg>
<div class="a" style="left:136.00px;top:1003.84px;font-size:12px;line-height:12px;color:#fff;transform:scaleX(0.9010);transform-origin:0 0;">Advanced Dyno Station</div>
<div class="a" style="left:1169px;top:993px;width:111px;height:31px;background:linear-gradient(#1c9af0 0px,#0e8ae8 3px,#0b80e0 26px,#0a72d0 31px);border-left:1px solid #1050a0;box-shadow:inset 1px 0 0 #40b0ff"></div>
<svg class="a" style="left:1159px;top:1000px" width="20" height="20"><defs><linearGradient id="tb" x1="0" y1="0" x2="0" y2="1"><stop offset="0" stop-color="#6cb8f8"/><stop offset="1" stop-color="#1a6ad8"/></linearGradient></defs><circle cx="10" cy="9.5" r="8.3" fill="url(#tb)" stroke="#b8d4f0" stroke-width="1"/><path d="M11.8 5L7.3 9.5L11.8 14" fill="none" stroke="#fff" stroke-width="2.4"/></svg>
<svg class="a" style="left:1180px;top:1001px" width="36" height="18"><path d="M1 1.5L3 0.5L5 1.5L7.5 0.5V8H1Z" fill="#f0a828"/><path d="M7.5 1H14.5V8H7.5Z" fill="#2a7ec8"/><path d="M1 8H7.5V15.5L5 14.5L3 15.5L1 14.5Z" fill="#48a838"/><path d="M7.5 8H14.5V15L12 16L7.5 15Z" fill="#e03424"/><path d="M29.6 3.6A6 6 0 1 0 29.6 13.4" fill="none" stroke="#d83c28" stroke-width="3.4"/><path d="M27 2.5L22.5 9" stroke="#3a80d0" stroke-width="2"/><path d="M18 10L24 8.5L25.5 12L21 16L17.5 15Z" fill="#e8c890" stroke="#a08050" stroke-width="0.6"/></svg>
<div class="a" style="left:1221.00px;top:1002.84px;font-size:12px;line-height:12px;color:#fff;transform:scaleX(0.8875);transform-origin:0 0;">10:23 AM</div></body></html>
